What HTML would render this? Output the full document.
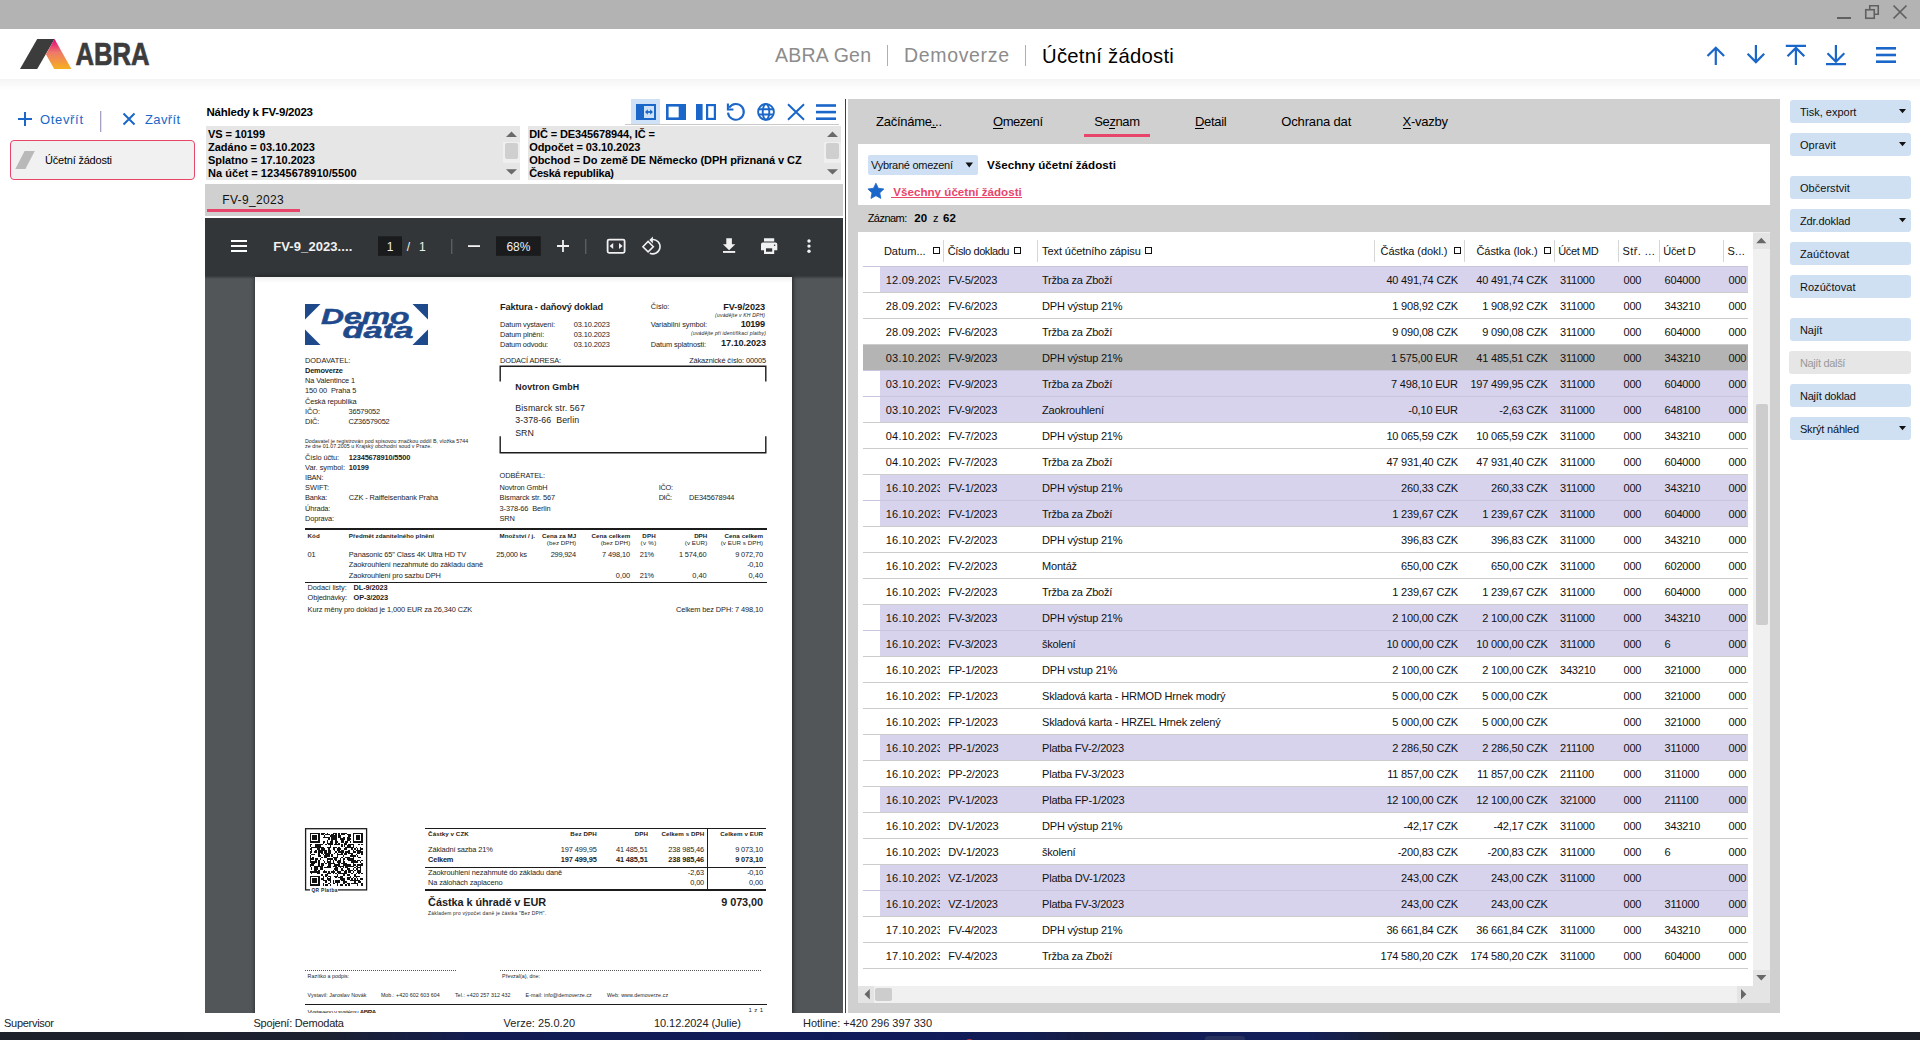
<!DOCTYPE html>
<html><head><meta charset="utf-8"><title>ABRA Gen - Účetní žádosti</title>
<style>
html,body{margin:0;padding:0;}
body{width:1920px;height:1040px;overflow:hidden;position:relative;background:#fff;font-family:"Liberation Sans", sans-serif;color:#000;}
.t{position:absolute;white-space:nowrap;}
svg{overflow:visible;}
</style></head><body>
<div style="position:absolute;left:0px;top:0px;width:1920px;height:29px;background:#b3b3b3;"></div>
<svg style="position:absolute;left:1830px;top:0px;" width="90" height="29" viewBox="1830 0 90 29"><rect x="1837" y="17" width="14" height="2" fill="#606060"/><rect x="1865.75" y="9.75" width="8.5" height="8.5" fill="none" stroke="#606060" stroke-width="1.6"/><path d="M1869.75 9.2V5.75H1878.25V14.25H1874.8" fill="none" stroke="#606060" stroke-width="1.6"/><path d="M1893.5 5.5L1906.5 18.5M1906.5 5.5L1893.5 18.5" stroke="#606060" stroke-width="1.7"/></svg>
<div style="position:absolute;left:0;top:79px;width:1920px;height:10px;background:linear-gradient(#f4f4f4,#f7f7f7 30%,#fdfdfd 90%,#fefefe)"></div>
<svg style="position:absolute;left:15px;top:35px;" width="140" height="40" viewBox="15 35 140 40"><defs><linearGradient id="lg" x1="0" y1="0" x2="0" y2="1"><stop offset="0" stop-color="#e4007c"/><stop offset="0.45" stop-color="#ee7a6a"/><stop offset="1" stop-color="#f6b01e"/></linearGradient></defs><polygon points="20,69 37.2,69 54.6,39 37.2,39" fill="#3c3c3c"/><polygon points="54.6,39 71.4,69 54.2,69 45.9,54.2" fill="url(#lg)"/><text x="75.4" y="64.6" font-family="Liberation Sans" font-weight="bold" font-size="31" fill="#3c3c3c" stroke="#3c3c3c" stroke-width="0.7" textLength="74.2" lengthAdjust="spacingAndGlyphs">ABRA</text></svg>
<div class="t" style="left:775px;top:46.49px;font-size:19.5px;line-height:19.5px;color:#8c8c8c;letter-spacing:0.242px;">ABRA Gen</div>
<div style="position:absolute;left:887px;top:45px;width:1px;height:21px;background:#aeaacb;"></div>
<div class="t" style="left:904px;top:46.49px;font-size:19.5px;line-height:19.5px;color:#8c8c8c;letter-spacing:0.662px;">Demoverze</div>
<div style="position:absolute;left:1025px;top:45px;width:1px;height:21px;background:#aeaacb;"></div>
<div class="t" style="left:1042px;top:45.82px;font-size:20.3px;line-height:20.3px;letter-spacing:0.259px;">Účetní žádosti</div>
<svg style="position:absolute;left:1700px;top:40px;" width="210" height="30" viewBox="1700 40 210 30"><g stroke="#1a67c9" stroke-width="2.2" fill="none"><path d="M1715.8 47.5V65M1707.5 56L1715.8 47.7L1724.1 56"/><path d="M1755.9 45V62.5M1747.6 53.8L1755.9 62.1L1764.2 53.8"/><path d="M1785.8 45.8H1806M1795.9 47.8V65M1787.5 56.3L1795.9 47.9L1804.3 56.3"/><path d="M1835.9 45V62.5M1827.5 53.3L1835.9 61.7L1844.3 53.3M1826 64.2H1846"/></g><g fill="#1a67c9"><rect x="1876" y="47" width="20" height="2.6"/><rect x="1876" y="53.7" width="20" height="2.6"/><rect x="1876" y="60.4" width="20" height="2.6"/></g></svg>
<svg style="position:absolute;left:10px;top:105px;" width="180" height="30" viewBox="10 105 180 30"><g stroke="#1a67c9" stroke-width="2" fill="none"><path d="M25 112V126M18 119H32"/><path d="M123.5 113.5L134.5 124.5M134.5 113.5L123.5 124.5"/></g><rect x="100" y="111" width="1.3" height="21" fill="#a5a2c3"/></svg>
<div class="t" style="left:40px;top:113.0px;font-size:13px;line-height:13px;color:#1a67c9;letter-spacing:0.666px;">Otevřít</div>
<div class="t" style="left:145px;top:113.0px;font-size:13px;line-height:13px;color:#1a67c9;letter-spacing:0.355px;">Zavřít</div>
<div style="position:absolute;left:10px;top:140px;width:185px;height:40px;background:#f1f1f1;border:1.3px solid #e8456b;border-radius:4px;box-sizing:border-box;"></div>
<svg style="position:absolute;left:14px;top:150px;" width="24" height="20" viewBox="14 150 24 20"><polygon points="15.3,169 25.4,169 34.8,151 24.6,151" fill="#b9b9b9"/></svg>
<div class="t" style="left:45px;top:154.69px;font-size:11px;line-height:11px;letter-spacing:-0.208px;">Účetní žádosti</div>
<div class="t" style="left:206.5px;top:107.27px;font-size:11.5px;line-height:11.5px;font-weight:bold;letter-spacing:-0.227px;">Náhledy k FV-9/2023</div>
<div style="position:absolute;left:631px;top:99px;width:29px;height:25px;background:#cfe1f6;"></div>
<svg style="position:absolute;left:630px;top:98px;" width="212" height="28" viewBox="630 98 212 28"><rect x="636" y="104" width="20" height="16" fill="#1a67c9"/><rect x="644" y="106" width="10" height="12" fill="#cfe1f6"/><path d="M646.3 112H651.7" stroke="#1a67c9" stroke-width="1.8"/><path d="M645 112L647.8 109.2V114.8Z M653 112L650.2 109.2V114.8Z" fill="#1a67c9"/><rect x="667.3" y="105.3" width="17.4" height="13.4" fill="none" stroke="#1a67c9" stroke-width="2.6"/><rect x="678.7" y="104" width="7.3" height="16" fill="#1a67c9"/><rect x="696" y="104" width="6.6" height="16" fill="#1a67c9"/><rect x="707.1" y="105.1" width="7.8" height="13.8" fill="none" stroke="#1a67c9" stroke-width="2.2"/><path d="M728 112.6A7.9 7.9 0 1 0 729.2 107.6" fill="none" stroke="#1a67c9" stroke-width="2.1"/><path d="M727.9 103.6V109.5H733.4" fill="none" stroke="#1a67c9" stroke-width="2.1"/><g fill="none" stroke="#1a67c9" stroke-width="1.9"><circle cx="766" cy="111.9" r="7.9"/><ellipse cx="766" cy="111.9" rx="3.3" ry="7.9"/><path d="M758.3 109.3H773.7M758.3 114.5H773.7"/></g><path d="M788 104.2L804 119.8M804 104.2L788 119.8" stroke="#1a67c9" stroke-width="2"/><g fill="#1a67c9"><rect x="816" y="104.2" width="20" height="2.6"/><rect x="816" y="110.8" width="20" height="2.6"/><rect x="816" y="117.4" width="20" height="2.6"/></g></svg>
<div style="position:absolute;left:625px;top:124px;width:214px;height:1px;background:#c9c9c9;"></div>
<div style="position:absolute;left:845px;top:99px;width:1.2px;height:914px;background:#3d3d3d;"></div>
<div style="position:absolute;left:206px;top:126px;width:314px;height:54px;background:#e6e6e6;"></div>
<div style="position:absolute;left:503px;top:126px;width:17px;height:54px;background:#e6e6e6;"></div>
<div style="position:absolute;left:503px;top:142px;width:17px;height:21px;background:#efefef;"></div>
<div style="position:absolute;left:505px;top:143px;width:13px;height:16px;background:#cfcfcf;border-radius:2px;"></div>
<svg style="position:absolute;left:503px;top:126px;" width="17" height="54" viewBox="503 126 17 54"><path d="M506 137L511.5 131.6L517 137Z M506 169.2L511.5 174.6L517 169.2Z" fill="#6a6a6a"/></svg>
<div class="t" style="left:208px;top:129.19px;font-size:11px;line-height:11px;font-weight:bold;letter-spacing:-0.089px;">VS = 10199</div>
<div class="t" style="left:208px;top:142.19px;font-size:11px;line-height:11px;font-weight:bold;letter-spacing:0.016px;">Zadáno = 03.10.2023</div>
<div class="t" style="left:208px;top:155.19px;font-size:11px;line-height:11px;font-weight:bold;letter-spacing:-0.049px;">Splatno = 17.10.2023</div>
<div class="t" style="left:208px;top:168.19px;font-size:11px;line-height:11px;font-weight:bold;letter-spacing:0.056px;">Na účet = 12345678910/5500</div>
<div style="position:absolute;left:527.5px;top:126px;width:313.5px;height:54px;background:#e6e6e6;"></div>
<div style="position:absolute;left:824px;top:126px;width:17px;height:54px;background:#e6e6e6;"></div>
<div style="position:absolute;left:824px;top:142px;width:17px;height:21px;background:#efefef;"></div>
<div style="position:absolute;left:826px;top:143px;width:13px;height:16px;background:#cfcfcf;border-radius:2px;"></div>
<svg style="position:absolute;left:824px;top:126px;" width="17" height="54" viewBox="824 126 17 54"><path d="M827 137L832.5 131.6L838 137Z M827 169.2L832.5 174.6L838 169.2Z" fill="#6a6a6a"/></svg>
<div class="t" style="left:529.2px;top:129.19px;font-size:11px;line-height:11px;font-weight:bold;letter-spacing:-0.119px;">DIČ = DE345678944, IČ =</div>
<div class="t" style="left:529.2px;top:142.19px;font-size:11px;line-height:11px;font-weight:bold;letter-spacing:-0.053px;">Odpočet = 03.10.2023</div>
<div class="t" style="left:529.2px;top:155.19px;font-size:11px;line-height:11px;font-weight:bold;letter-spacing:-0.05px;">Obchod = Do země DE Německo (DPH přiznaná v CZ</div>
<div class="t" style="left:529.2px;top:168.19px;font-size:11px;line-height:11px;font-weight:bold;letter-spacing:-0.216px;">Česká republika)</div>
<div style="position:absolute;left:205px;top:184px;width:638px;height:32px;background:#d0d0d0;"></div>
<div class="t" style="left:222.3px;top:194.44px;font-size:12px;line-height:12px;color:#111;letter-spacing:0.323px;">FV-9_2023</div>
<div style="position:absolute;left:207px;top:209px;width:93px;height:3px;background:#e8456b;"></div>
<div style="position:absolute;left:205px;top:218px;width:638px;height:58px;background:#323639;"></div>
<div style="position:absolute;left:205px;top:276px;width:638px;height:737px;background:#525659;"></div>
<div style="position:absolute;left:205px;top:276px;width:638px;height:3px;background:linear-gradient(rgba(0,0,0,0.35),rgba(0,0,0,0))"></div>
<svg style="position:absolute;left:205px;top:218px;" width="638" height="58" viewBox="205 218 638 58"><g fill="#fff"><rect x="231" y="240" width="16" height="2"/><rect x="231" y="245" width="16" height="2"/><rect x="231" y="250" width="16" height="2"/></g><rect x="378" y="236.3" width="24" height="19.5" fill="#191b1c"/><rect x="451.3" y="239" width="1" height="15" fill="#6c6f72"/><rect x="468" y="245.2" width="12" height="1.8" fill="#f1f1f1"/><rect x="496" y="236.3" width="44.8" height="19.5" fill="#191b1c"/><path d="M563 240V252M557 246H569" stroke="#f1f1f1" stroke-width="1.8"/><rect x="585.3" y="239" width="1" height="15" fill="#6c6f72"/><rect x="607.6" y="239.6" width="17" height="13.2" rx="1.5" fill="none" stroke="#f1f1f1" stroke-width="1.8"/><path d="M609.6 246L613.2 242.9V249.1Z M622.6 246L619 242.9V249.1Z" fill="#f1f1f1"/><path d="M642.9 246.7L648.1 241.5L653.3 246.7L648.1 251.9Z" fill="none" stroke="#f1f1f1" stroke-width="1.6"/><path d="M652.2 239.5A7.2 7.2 0 1 1 649.8 253.2" fill="none" stroke="#f1f1f1" stroke-width="1.6"/><path d="M649.3 240.1L652.9 236.5V243.6Z" fill="#f1f1f1"/><path d="M726.3 238.3H731.9V244.2H735.3L729.1 250.2L722.9 244.2H726.3Z" fill="#f1f1f1"/><rect x="723" y="251" width="12.2" height="1.9" fill="#f1f1f1"/><path d="M764 238.3H774.2V241.6H764Z M762.8 242.6H775.5Q777.3 242.6 777.3 244.4V250.2H774.2V253.9H764V250.2H761V244.4Q761 242.6 762.8 242.6Z" fill="#f1f1f1"/><rect x="766" y="248.3" width="6.2" height="3.4" fill="#323639"/><circle cx="774.6" cy="245.2" r="0.8" fill="#323639"/><g fill="#f1f1f1"><circle cx="809" cy="241" r="1.7"/><circle cx="809" cy="246.1" r="1.7"/><circle cx="809" cy="251.2" r="1.7"/></g></svg>
<div class="t" style="left:273.3px;top:240.0px;font-size:13px;line-height:13px;font-weight:bold;color:#f1f1f1;letter-spacing:0.079px;">FV-9_2023....</div>
<div class="t" style="left:-110px;width:1000px;text-align:center;top:240.84px;font-size:12px;line-height:12px;color:#f1f1f1;">1</div>
<div class="t" style="left:-91.69999999999999px;width:1000px;text-align:center;top:240.84px;font-size:12px;line-height:12px;color:#f1f1f1;">/</div>
<div class="t" style="left:-77.69999999999999px;width:1000px;text-align:center;top:240.84px;font-size:12px;line-height:12px;color:#f1f1f1;">1</div>
<div class="t" style="left:18.399999999999977px;width:1000px;text-align:center;top:240.84px;font-size:12px;line-height:12px;color:#f1f1f1;">68%</div>
<div style="position:absolute;left:0;top:0;width:1920px;height:1013px;overflow:hidden">
<div style="position:absolute;left:255px;top:277px;width:537px;height:760px;background:#fff;box-shadow:0 0 4px 0.5px rgba(0,0,0,0.6);"></div>
<div style="position:absolute;left:255px;top:277px;width:537px;height:6px;background:linear-gradient(rgba(0,0,0,0.06),rgba(0,0,0,0))"></div>
<svg style="position:absolute;left:300px;top:300px;" width="135" height="50" viewBox="300 300 135 50"><g fill="#1e4a8c"><polygon points="305,304 320.5,304 305,319.5"/><polygon points="412.5,304 428,304 428,319.5"/><polygon points="305,329.5 305,345 320.5,345"/><polygon points="428,329.5 428,345 412.5,345"/></g><text x="321" y="324.3" font-family="Liberation Sans" font-weight="bold" font-style="italic" font-size="22.3" fill="#1e4a8c" stroke="#1e4a8c" stroke-width="0.5" textLength="88.5" lengthAdjust="spacingAndGlyphs">Demo</text><text x="342.5" y="338.4" font-family="Liberation Sans" font-weight="bold" font-style="italic" font-size="22.3" fill="#1e4a8c" stroke="#1e4a8c" stroke-width="0.5" textLength="71" lengthAdjust="spacingAndGlyphs">data</text></svg>
<div class="t" style="left:500.1px;top:303.21px;font-size:9.2px;line-height:9.2px;font-weight:bold;color:#1c1c1c;letter-spacing:-0.124px;">Faktura - daňový doklad</div>
<div class="t" style="left:650.8px;top:302.94px;font-size:7.4px;line-height:7.4px;color:#1c1c1c;letter-spacing:-0.083px;">Číslo:</div>
<div class="t" style="left:-234.969px;width:1000px;text-align:right;top:303.21px;font-size:9.2px;line-height:9.2px;font-weight:bold;color:#1c1c1c;letter-spacing:-0.069px;">FV-9/2023</div>
<div class="t" style="left:-234.806px;width:1000px;text-align:right;top:312.97px;font-size:5px;line-height:5px;color:#1c1c1c;font-style:italic;letter-spacing:0.194px;">(uvádějte v KH DPH)</div>
<div class="t" style="left:500.1px;top:320.74px;font-size:7.4px;line-height:7.4px;color:#1c1c1c;letter-spacing:-0.138px;">Datum vystavení:</div>
<div class="t" style="left:573.8px;top:320.74px;font-size:7.4px;line-height:7.4px;color:#1c1c1c;letter-spacing:-0.115px;">03.10.2023</div>
<div class="t" style="left:500.1px;top:330.84px;font-size:7.4px;line-height:7.4px;color:#1c1c1c;letter-spacing:-0.156px;">Datum plnění:</div>
<div class="t" style="left:573.8px;top:330.84px;font-size:7.4px;line-height:7.4px;color:#1c1c1c;letter-spacing:-0.115px;">03.10.2023</div>
<div class="t" style="left:500.1px;top:340.74px;font-size:7.4px;line-height:7.4px;color:#1c1c1c;letter-spacing:-0.174px;">Datum odvodu:</div>
<div class="t" style="left:573.8px;top:340.74px;font-size:7.4px;line-height:7.4px;color:#1c1c1c;letter-spacing:-0.115px;">03.10.2023</div>
<div class="t" style="left:650.8px;top:320.74px;font-size:7.4px;line-height:7.4px;color:#1c1c1c;letter-spacing:-0.086px;">Variabilní symbol:</div>
<div class="t" style="left:-235.296px;width:1000px;text-align:right;top:320.21px;font-size:9.2px;line-height:9.2px;font-weight:bold;color:#1c1c1c;letter-spacing:-0.296px;">10199</div>
<div class="t" style="left:-234.017px;width:1000px;text-align:right;top:331.07px;font-size:5px;line-height:5px;color:#1c1c1c;font-style:italic;letter-spacing:0.183px;">(uvádějte při identifikaci platby)</div>
<div class="t" style="left:650.8px;top:340.74px;font-size:7.4px;line-height:7.4px;color:#1c1c1c;letter-spacing:-0.111px;">Datum splatnosti:</div>
<div class="t" style="left:-234.116px;width:1000px;text-align:right;top:338.91px;font-size:9.2px;line-height:9.2px;font-weight:bold;color:#1c1c1c;letter-spacing:-0.116px;">17.10.2023</div>
<div class="t" style="left:500.1px;top:356.74px;font-size:7.4px;line-height:7.4px;color:#1c1c1c;letter-spacing:-0.147px;">DODACÍ ADRESA:</div>
<div class="t" style="left:-234.109px;width:1000px;text-align:right;top:356.74px;font-size:7.4px;line-height:7.4px;color:#1c1c1c;letter-spacing:-0.109px;">Zákaznické číslo: 00005</div>
<svg style="position:absolute;left:495px;top:362px;" width="275" height="95" viewBox="495 362 275 95"><g fill="none" stroke="#1c1c1c" stroke-width="1.4"><path d="M500.2 381.5V366.3H765.8V381.5"/><path d="M500.2 436.3V452.8H765.8V436.3"/></g></svg>
<div class="t" style="left:515.3px;top:383.25px;font-size:8.8px;line-height:8.8px;font-weight:bold;color:#1c1c1c;letter-spacing:0.111px;">Novtron GmbH</div>
<div class="t" style="left:515.3px;top:403.75px;font-size:8.8px;line-height:8.8px;color:#1c1c1c;letter-spacing:0.126px;">Bismarck str. 567</div>
<div class="t" style="left:515.3px;top:416.25px;font-size:8.8px;line-height:8.8px;color:#1c1c1c;letter-spacing:0.079px;">3-378-66&nbsp; Berlin</div>
<div class="t" style="left:515.3px;top:429.35px;font-size:8.8px;line-height:8.8px;color:#1c1c1c;letter-spacing:-0.04px;">SRN</div>
<div class="t" style="left:305px;top:356.94px;font-size:7.4px;line-height:7.4px;color:#1c1c1c;letter-spacing:0.019px;">DODAVATEL:</div>
<div class="t" style="left:305px;top:367.04px;font-size:7.4px;line-height:7.4px;font-weight:bold;color:#1c1c1c;letter-spacing:-0.186px;">Demoverze</div>
<div class="t" style="left:305px;top:377.04px;font-size:7.4px;line-height:7.4px;color:#1c1c1c;letter-spacing:-0.107px;">Na Valentince 1</div>
<div class="t" style="left:305px;top:387.14px;font-size:7.4px;line-height:7.4px;color:#1c1c1c;letter-spacing:-0.09px;">150 00&nbsp; Praha 5</div>
<div class="t" style="left:305px;top:397.94px;font-size:7.4px;line-height:7.4px;color:#1c1c1c;letter-spacing:-0.097px;">Česká republika</div>
<div class="t" style="left:305px;top:408.04px;font-size:7.4px;line-height:7.4px;color:#1c1c1c;letter-spacing:-0.071px;">IČO:</div>
<div class="t" style="left:348.6px;top:408.04px;font-size:7.4px;line-height:7.4px;color:#1c1c1c;letter-spacing:-0.204px;">36579052</div>
<div class="t" style="left:305px;top:418.04px;font-size:7.4px;line-height:7.4px;color:#1c1c1c;letter-spacing:-0.2px;">DIČ:</div>
<div class="t" style="left:348.6px;top:418.04px;font-size:7.4px;line-height:7.4px;color:#1c1c1c;letter-spacing:-0.177px;">CZ36579052</div>
<div class="t" style="left:305px;top:438.71px;font-size:5.3px;line-height:5.3px;color:#1c1c1c;letter-spacing:0.048px;">Dodavatel je registrován pod spisovou značkou oddíl B, vložka 5744</div>
<div class="t" style="left:305px;top:444.41px;font-size:5.3px;line-height:5.3px;color:#1c1c1c;letter-spacing:0.048px;">ze dne 01.07.2005 u Krajský obchodní soud v Praze.</div>
<div class="t" style="left:305.1px;top:453.54px;font-size:7.4px;line-height:7.4px;color:#1c1c1c;letter-spacing:-0.096px;">Číslo účtu:</div>
<div class="t" style="left:348.8px;top:453.54px;font-size:7.4px;line-height:7.4px;font-weight:bold;color:#1c1c1c;letter-spacing:-0.146px;">12345678910/5500</div>
<div class="t" style="left:305.1px;top:463.64px;font-size:7.4px;line-height:7.4px;color:#1c1c1c;letter-spacing:-0.015px;">Var. symbol:</div>
<div class="t" style="left:348.8px;top:463.64px;font-size:7.4px;line-height:7.4px;font-weight:bold;color:#1c1c1c;letter-spacing:-0.145px;">10199</div>
<div class="t" style="left:305.1px;top:474.24px;font-size:7.4px;line-height:7.4px;color:#1c1c1c;letter-spacing:-0.232px;">IBAN:</div>
<div class="t" style="left:305.1px;top:484.34px;font-size:7.4px;line-height:7.4px;color:#1c1c1c;letter-spacing:-0.05px;">SWIFT:</div>
<div class="t" style="left:305.1px;top:494.44px;font-size:7.4px;line-height:7.4px;color:#1c1c1c;letter-spacing:-0.168px;">Banka:</div>
<div class="t" style="left:348.8px;top:494.44px;font-size:7.4px;line-height:7.4px;color:#1c1c1c;letter-spacing:-0.104px;">CZK - Raiffeisenbank Praha</div>
<div class="t" style="left:305.1px;top:504.54px;font-size:7.4px;line-height:7.4px;color:#1c1c1c;letter-spacing:-0.171px;">Úhrada:</div>
<div class="t" style="left:305.1px;top:514.64px;font-size:7.4px;line-height:7.4px;color:#1c1c1c;letter-spacing:-0.147px;">Doprava:</div>
<div class="t" style="left:499.6px;top:471.74px;font-size:7.4px;line-height:7.4px;color:#1c1c1c;letter-spacing:-0.092px;">ODBĚRATEL:</div>
<div class="t" style="left:499.6px;top:484.34px;font-size:7.4px;line-height:7.4px;color:#1c1c1c;letter-spacing:-0.123px;">Novtron GmbH</div>
<div class="t" style="left:499.6px;top:494.44px;font-size:7.4px;line-height:7.4px;color:#1c1c1c;letter-spacing:-0.072px;">Bismarck str. 567</div>
<div class="t" style="left:499.6px;top:504.54px;font-size:7.4px;line-height:7.4px;color:#1c1c1c;letter-spacing:-0.11px;">3-378-66&nbsp; Berlin</div>
<div class="t" style="left:499.6px;top:514.64px;font-size:7.4px;line-height:7.4px;color:#1c1c1c;letter-spacing:-0.212px;">SRN</div>
<div class="t" style="left:658.7px;top:484.34px;font-size:7.4px;line-height:7.4px;color:#1c1c1c;letter-spacing:-0.271px;">IČO:</div>
<div class="t" style="left:658.7px;top:494.44px;font-size:7.4px;line-height:7.4px;color:#1c1c1c;letter-spacing:-0.467px;">DIČ:</div>
<div class="t" style="left:689px;top:494.44px;font-size:7.4px;line-height:7.4px;color:#1c1c1c;letter-spacing:-0.182px;">DE345678944</div>
<div style="position:absolute;left:305px;top:528px;width:461.8px;height:2.2px;background:#1c1c1c;"></div>
<div class="t" style="left:307.6px;top:532.85px;font-size:6.2px;line-height:6.2px;font-weight:bold;color:#1c1c1c;letter-spacing:0.024px;">Kód</div>
<div class="t" style="left:348.8px;top:532.85px;font-size:6.2px;line-height:6.2px;font-weight:bold;color:#1c1c1c;letter-spacing:0.038px;">Předmět zdanitelného plnění</div>
<div class="t" style="left:499.6px;top:532.85px;font-size:6.2px;line-height:6.2px;font-weight:bold;color:#1c1c1c;letter-spacing:0.022px;">Množství / j.</div>
<div class="t" style="left:-423.863px;width:1000px;text-align:right;top:532.85px;font-size:6.2px;line-height:6.2px;font-weight:bold;color:#1c1c1c;letter-spacing:0.037px;">Cena za MJ</div>
<div class="t" style="left:-423.855px;width:1000px;text-align:right;top:539.65px;font-size:6.2px;line-height:6.2px;color:#1c1c1c;letter-spacing:0.045px;">(bez DPH)</div>
<div class="t" style="left:-369.701px;width:1000px;text-align:right;top:532.85px;font-size:6.2px;line-height:6.2px;font-weight:bold;color:#1c1c1c;letter-spacing:0.099px;">Cena celkem</div>
<div class="t" style="left:-369.717px;width:1000px;text-align:right;top:539.65px;font-size:6.2px;line-height:6.2px;color:#1c1c1c;letter-spacing:0.083px;">(bez DPH)</div>
<div class="t" style="left:-344.145px;width:1000px;text-align:right;top:532.85px;font-size:6.2px;line-height:6.2px;font-weight:bold;color:#1c1c1c;letter-spacing:0.155px;">DPH</div>
<div class="t" style="left:-343.491px;width:1000px;text-align:right;top:539.65px;font-size:6.2px;line-height:6.2px;color:#1c1c1c;letter-spacing:0.309px;">(v %)</div>
<div class="t" style="left:-292.795px;width:1000px;text-align:right;top:532.85px;font-size:6.2px;line-height:6.2px;font-weight:bold;color:#1c1c1c;letter-spacing:0.005px;">DPH</div>
<div class="t" style="left:-292.724px;width:1000px;text-align:right;top:539.65px;font-size:6.2px;line-height:6.2px;color:#1c1c1c;letter-spacing:0.076px;">(v EUR)</div>
<div class="t" style="left:-236.931px;width:1000px;text-align:right;top:532.85px;font-size:6.2px;line-height:6.2px;font-weight:bold;color:#1c1c1c;letter-spacing:0.069px;">Cena celkem</div>
<div class="t" style="left:-236.94px;width:1000px;text-align:right;top:539.65px;font-size:6.2px;line-height:6.2px;color:#1c1c1c;letter-spacing:0.06px;">(v EUR s DPH)</div>
<div class="t" style="left:307.6px;top:551.24px;font-size:7.4px;line-height:7.4px;color:#1c1c1c;letter-spacing:-0.131px;">01</div>
<div class="t" style="left:348.8px;top:551.24px;font-size:7.4px;line-height:7.4px;color:#1c1c1c;letter-spacing:-0.104px;">Panasonic 65" Class 4K Ultra HD TV</div>
<div class="t" style="left:496.3px;top:551.24px;font-size:7.4px;line-height:7.4px;color:#1c1c1c;letter-spacing:-0.186px;">25,000 ks</div>
<div class="t" style="left:-424.108px;width:1000px;text-align:right;top:551.24px;font-size:7.4px;line-height:7.4px;color:#1c1c1c;letter-spacing:-0.208px;">299,924</div>
<div class="t" style="left:-369.872px;width:1000px;text-align:right;top:551.24px;font-size:7.4px;line-height:7.4px;color:#1c1c1c;letter-spacing:-0.072px;">7 498,10</div>
<div class="t" style="left:639.8px;top:551.24px;font-size:7.4px;line-height:7.4px;color:#1c1c1c;letter-spacing:-0.205px;">21%</div>
<div class="t" style="left:-293.444px;width:1000px;text-align:right;top:551.24px;font-size:7.4px;line-height:7.4px;color:#1c1c1c;letter-spacing:-0.144px;">1 574,60</div>
<div class="t" style="left:-237.144px;width:1000px;text-align:right;top:551.24px;font-size:7.4px;line-height:7.4px;color:#1c1c1c;letter-spacing:-0.144px;">9 072,70</div>
<div class="t" style="left:348.8px;top:561.44px;font-size:7.4px;line-height:7.4px;color:#1c1c1c;letter-spacing:-0.104px;">Zaokrouhlení nezahmuté do základu daně</div>
<div class="t" style="left:-237.242px;width:1000px;text-align:right;top:561.44px;font-size:7.4px;line-height:7.4px;color:#1c1c1c;letter-spacing:-0.242px;">-0,10</div>
<div class="t" style="left:348.8px;top:571.94px;font-size:7.4px;line-height:7.4px;color:#1c1c1c;letter-spacing:-0.129px;">Zaokrouhlení pro sazbu DPH</div>
<div class="t" style="left:-369.801px;width:1000px;text-align:right;top:571.94px;font-size:7.4px;line-height:7.4px;color:#1c1c1c;letter-spacing:-0.001px;">0,00</div>
<div class="t" style="left:639.8px;top:571.94px;font-size:7.4px;line-height:7.4px;color:#1c1c1c;letter-spacing:-0.205px;">21%</div>
<div class="t" style="left:-293.301px;width:1000px;text-align:right;top:571.94px;font-size:7.4px;line-height:7.4px;color:#1c1c1c;letter-spacing:-0.001px;">0,40</div>
<div class="t" style="left:-236.934px;width:1000px;text-align:right;top:571.94px;font-size:7.4px;line-height:7.4px;color:#1c1c1c;letter-spacing:0.066px;">0,40</div>
<div style="position:absolute;left:305px;top:581.6px;width:461.8px;height:1.1px;background:#1c1c1c;"></div>
<div class="t" style="left:307.6px;top:584.14px;font-size:7.4px;line-height:7.4px;color:#1c1c1c;letter-spacing:-0.092px;">Dodací listy:</div>
<div class="t" style="left:353.6px;top:584.14px;font-size:7.4px;line-height:7.4px;font-weight:bold;color:#1c1c1c;letter-spacing:-0.108px;">DL-9/2023</div>
<div class="t" style="left:307.6px;top:594.24px;font-size:7.4px;line-height:7.4px;color:#1c1c1c;letter-spacing:-0.153px;">Objednávky:</div>
<div class="t" style="left:353.6px;top:594.24px;font-size:7.4px;line-height:7.4px;font-weight:bold;color:#1c1c1c;letter-spacing:-0.149px;">OP-3/2023</div>
<div class="t" style="left:307.6px;top:605.64px;font-size:7.4px;line-height:7.4px;color:#1c1c1c;letter-spacing:-0.099px;">Kurz měny pro doklad je 1,000 EUR za 26,340 CZK</div>
<div class="t" style="left:-237.112px;width:1000px;text-align:right;top:605.64px;font-size:7.4px;line-height:7.4px;color:#1c1c1c;letter-spacing:-0.112px;">Celkem bez DPH: 7 498,10</div>
<svg style="position:absolute;left:300px;top:820px;" width="75" height="80" viewBox="300 820 75 80"><rect x="305.6" y="828.7" width="61" height="61.2" fill="none" stroke="#1c1c1c" stroke-width="1.3"/><rect x="310" y="887" width="28" height="5" fill="#fff"/><path d="M309.60 832.50h1.44v1.44h-1.44zM309.60 833.94h1.44v1.44h-1.44zM309.60 835.37h1.44v1.44h-1.44zM309.60 836.81h1.44v1.44h-1.44zM309.60 838.24h1.44v1.44h-1.44zM309.60 839.68h1.44v1.44h-1.44zM309.60 841.11h1.44v1.44h-1.44zM309.60 843.98h1.44v1.44h-1.44zM309.60 845.42h1.44v1.44h-1.44zM309.60 848.29h1.44v1.44h-1.44zM309.60 851.16h1.44v1.44h-1.44zM309.60 852.59h1.44v1.44h-1.44zM309.60 855.46h1.44v1.44h-1.44zM309.60 856.90h1.44v1.44h-1.44zM309.60 858.33h1.44v1.44h-1.44zM309.60 859.77h1.44v1.44h-1.44zM309.60 861.20h1.44v1.44h-1.44zM309.60 864.07h1.44v1.44h-1.44zM309.60 865.51h1.44v1.44h-1.44zM309.60 871.25h1.44v1.44h-1.44zM309.60 875.55h1.44v1.44h-1.44zM309.60 876.99h1.44v1.44h-1.44zM309.60 878.42h1.44v1.44h-1.44zM309.60 879.86h1.44v1.44h-1.44zM309.60 881.29h1.44v1.44h-1.44zM309.60 882.73h1.44v1.44h-1.44zM309.60 884.16h1.44v1.44h-1.44zM311.04 832.50h1.44v1.44h-1.44zM311.04 841.11h1.44v1.44h-1.44zM311.04 843.98h1.44v1.44h-1.44zM311.04 846.85h1.44v1.44h-1.44zM311.04 848.29h1.44v1.44h-1.44zM311.04 849.72h1.44v1.44h-1.44zM311.04 851.16h1.44v1.44h-1.44zM311.04 854.03h1.44v1.44h-1.44zM311.04 858.33h1.44v1.44h-1.44zM311.04 861.20h1.44v1.44h-1.44zM311.04 862.64h1.44v1.44h-1.44zM311.04 864.07h1.44v1.44h-1.44zM311.04 866.94h1.44v1.44h-1.44zM311.04 868.38h1.44v1.44h-1.44zM311.04 871.25h1.44v1.44h-1.44zM311.04 872.68h1.44v1.44h-1.44zM311.04 875.55h1.44v1.44h-1.44zM311.04 884.16h1.44v1.44h-1.44zM312.47 832.50h1.44v1.44h-1.44zM312.47 835.37h1.44v1.44h-1.44zM312.47 836.81h1.44v1.44h-1.44zM312.47 838.24h1.44v1.44h-1.44zM312.47 841.11h1.44v1.44h-1.44zM312.47 846.85h1.44v1.44h-1.44zM312.47 854.03h1.44v1.44h-1.44zM312.47 856.90h1.44v1.44h-1.44zM312.47 858.33h1.44v1.44h-1.44zM312.47 861.20h1.44v1.44h-1.44zM312.47 862.64h1.44v1.44h-1.44zM312.47 864.07h1.44v1.44h-1.44zM312.47 871.25h1.44v1.44h-1.44zM312.47 875.55h1.44v1.44h-1.44zM312.47 878.42h1.44v1.44h-1.44zM312.47 879.86h1.44v1.44h-1.44zM312.47 881.29h1.44v1.44h-1.44zM312.47 884.16h1.44v1.44h-1.44zM313.91 832.50h1.44v1.44h-1.44zM313.91 835.37h1.44v1.44h-1.44zM313.91 836.81h1.44v1.44h-1.44zM313.91 838.24h1.44v1.44h-1.44zM313.91 841.11h1.44v1.44h-1.44zM313.91 846.85h1.44v1.44h-1.44zM313.91 851.16h1.44v1.44h-1.44zM313.91 854.03h1.44v1.44h-1.44zM313.91 861.20h1.44v1.44h-1.44zM313.91 862.64h1.44v1.44h-1.44zM313.91 865.51h1.44v1.44h-1.44zM313.91 866.94h1.44v1.44h-1.44zM313.91 868.38h1.44v1.44h-1.44zM313.91 869.81h1.44v1.44h-1.44zM313.91 871.25h1.44v1.44h-1.44zM313.91 875.55h1.44v1.44h-1.44zM313.91 878.42h1.44v1.44h-1.44zM313.91 879.86h1.44v1.44h-1.44zM313.91 881.29h1.44v1.44h-1.44zM313.91 884.16h1.44v1.44h-1.44zM315.34 832.50h1.44v1.44h-1.44zM315.34 835.37h1.44v1.44h-1.44zM315.34 836.81h1.44v1.44h-1.44zM315.34 838.24h1.44v1.44h-1.44zM315.34 841.11h1.44v1.44h-1.44zM315.34 843.98h1.44v1.44h-1.44zM315.34 845.42h1.44v1.44h-1.44zM315.34 846.85h1.44v1.44h-1.44zM315.34 849.72h1.44v1.44h-1.44zM315.34 851.16h1.44v1.44h-1.44zM315.34 858.33h1.44v1.44h-1.44zM315.34 859.77h1.44v1.44h-1.44zM315.34 861.20h1.44v1.44h-1.44zM315.34 865.51h1.44v1.44h-1.44zM315.34 866.94h1.44v1.44h-1.44zM315.34 868.38h1.44v1.44h-1.44zM315.34 869.81h1.44v1.44h-1.44zM315.34 871.25h1.44v1.44h-1.44zM315.34 875.55h1.44v1.44h-1.44zM315.34 878.42h1.44v1.44h-1.44zM315.34 879.86h1.44v1.44h-1.44zM315.34 881.29h1.44v1.44h-1.44zM315.34 884.16h1.44v1.44h-1.44zM316.78 832.50h1.44v1.44h-1.44zM316.78 841.11h1.44v1.44h-1.44zM316.78 843.98h1.44v1.44h-1.44zM316.78 845.42h1.44v1.44h-1.44zM316.78 846.85h1.44v1.44h-1.44zM316.78 848.29h1.44v1.44h-1.44zM316.78 858.33h1.44v1.44h-1.44zM316.78 865.51h1.44v1.44h-1.44zM316.78 866.94h1.44v1.44h-1.44zM316.78 868.38h1.44v1.44h-1.44zM316.78 871.25h1.44v1.44h-1.44zM316.78 872.68h1.44v1.44h-1.44zM316.78 875.55h1.44v1.44h-1.44zM316.78 884.16h1.44v1.44h-1.44zM318.21 832.50h1.44v1.44h-1.44zM318.21 833.94h1.44v1.44h-1.44zM318.21 835.37h1.44v1.44h-1.44zM318.21 836.81h1.44v1.44h-1.44zM318.21 838.24h1.44v1.44h-1.44zM318.21 839.68h1.44v1.44h-1.44zM318.21 841.11h1.44v1.44h-1.44zM318.21 843.98h1.44v1.44h-1.44zM318.21 845.42h1.44v1.44h-1.44zM318.21 846.85h1.44v1.44h-1.44zM318.21 848.29h1.44v1.44h-1.44zM318.21 849.72h1.44v1.44h-1.44zM318.21 851.16h1.44v1.44h-1.44zM318.21 852.59h1.44v1.44h-1.44zM318.21 854.03h1.44v1.44h-1.44zM318.21 855.46h1.44v1.44h-1.44zM318.21 859.77h1.44v1.44h-1.44zM318.21 861.20h1.44v1.44h-1.44zM318.21 862.64h1.44v1.44h-1.44zM318.21 864.07h1.44v1.44h-1.44zM318.21 865.51h1.44v1.44h-1.44zM318.21 869.81h1.44v1.44h-1.44zM318.21 871.25h1.44v1.44h-1.44zM318.21 872.68h1.44v1.44h-1.44zM318.21 875.55h1.44v1.44h-1.44zM318.21 876.99h1.44v1.44h-1.44zM318.21 878.42h1.44v1.44h-1.44zM318.21 879.86h1.44v1.44h-1.44zM318.21 881.29h1.44v1.44h-1.44zM318.21 882.73h1.44v1.44h-1.44zM318.21 884.16h1.44v1.44h-1.44zM319.65 843.98h1.44v1.44h-1.44zM319.65 845.42h1.44v1.44h-1.44zM319.65 846.85h1.44v1.44h-1.44zM319.65 849.72h1.44v1.44h-1.44zM319.65 851.16h1.44v1.44h-1.44zM319.65 855.46h1.44v1.44h-1.44zM319.65 858.33h1.44v1.44h-1.44zM319.65 865.51h1.44v1.44h-1.44zM319.65 866.94h1.44v1.44h-1.44zM319.65 868.38h1.44v1.44h-1.44zM321.08 832.50h1.44v1.44h-1.44zM321.08 833.94h1.44v1.44h-1.44zM321.08 843.98h1.44v1.44h-1.44zM321.08 846.85h1.44v1.44h-1.44zM321.08 848.29h1.44v1.44h-1.44zM321.08 849.72h1.44v1.44h-1.44zM321.08 851.16h1.44v1.44h-1.44zM321.08 852.59h1.44v1.44h-1.44zM321.08 856.90h1.44v1.44h-1.44zM321.08 862.64h1.44v1.44h-1.44zM321.08 864.07h1.44v1.44h-1.44zM321.08 865.51h1.44v1.44h-1.44zM321.08 866.94h1.44v1.44h-1.44zM321.08 868.38h1.44v1.44h-1.44zM321.08 874.12h1.44v1.44h-1.44zM321.08 878.42h1.44v1.44h-1.44zM322.52 832.50h1.44v1.44h-1.44zM322.52 833.94h1.44v1.44h-1.44zM322.52 836.81h1.44v1.44h-1.44zM322.52 841.11h1.44v1.44h-1.44zM322.52 842.55h1.44v1.44h-1.44zM322.52 846.85h1.44v1.44h-1.44zM322.52 848.29h1.44v1.44h-1.44zM322.52 849.72h1.44v1.44h-1.44zM322.52 854.03h1.44v1.44h-1.44zM322.52 859.77h1.44v1.44h-1.44zM322.52 862.64h1.44v1.44h-1.44zM322.52 864.07h1.44v1.44h-1.44zM322.52 871.25h1.44v1.44h-1.44zM322.52 875.55h1.44v1.44h-1.44zM322.52 876.99h1.44v1.44h-1.44zM322.52 878.42h1.44v1.44h-1.44zM322.52 879.86h1.44v1.44h-1.44zM322.52 882.73h1.44v1.44h-1.44zM322.52 884.16h1.44v1.44h-1.44zM323.95 832.50h1.44v1.44h-1.44zM323.95 835.37h1.44v1.44h-1.44zM323.95 836.81h1.44v1.44h-1.44zM323.95 841.11h1.44v1.44h-1.44zM323.95 848.29h1.44v1.44h-1.44zM323.95 849.72h1.44v1.44h-1.44zM323.95 851.16h1.44v1.44h-1.44zM323.95 852.59h1.44v1.44h-1.44zM323.95 855.46h1.44v1.44h-1.44zM323.95 856.90h1.44v1.44h-1.44zM323.95 861.20h1.44v1.44h-1.44zM323.95 866.94h1.44v1.44h-1.44zM323.95 869.81h1.44v1.44h-1.44zM323.95 871.25h1.44v1.44h-1.44zM323.95 879.86h1.44v1.44h-1.44zM325.39 833.94h1.44v1.44h-1.44zM325.39 836.81h1.44v1.44h-1.44zM325.39 843.98h1.44v1.44h-1.44zM325.39 849.72h1.44v1.44h-1.44zM325.39 851.16h1.44v1.44h-1.44zM325.39 852.59h1.44v1.44h-1.44zM325.39 854.03h1.44v1.44h-1.44zM325.39 855.46h1.44v1.44h-1.44zM325.39 856.90h1.44v1.44h-1.44zM325.39 862.64h1.44v1.44h-1.44zM325.39 866.94h1.44v1.44h-1.44zM325.39 871.25h1.44v1.44h-1.44zM325.39 874.12h1.44v1.44h-1.44zM325.39 875.55h1.44v1.44h-1.44zM325.39 879.86h1.44v1.44h-1.44zM325.39 881.29h1.44v1.44h-1.44zM325.39 884.16h1.44v1.44h-1.44zM326.82 832.50h1.44v1.44h-1.44zM326.82 833.94h1.44v1.44h-1.44zM326.82 836.81h1.44v1.44h-1.44zM326.82 839.68h1.44v1.44h-1.44zM326.82 841.11h1.44v1.44h-1.44zM326.82 842.55h1.44v1.44h-1.44zM326.82 846.85h1.44v1.44h-1.44zM326.82 852.59h1.44v1.44h-1.44zM326.82 854.03h1.44v1.44h-1.44zM326.82 855.46h1.44v1.44h-1.44zM326.82 858.33h1.44v1.44h-1.44zM326.82 859.77h1.44v1.44h-1.44zM326.82 861.20h1.44v1.44h-1.44zM326.82 865.51h1.44v1.44h-1.44zM326.82 866.94h1.44v1.44h-1.44zM326.82 872.68h1.44v1.44h-1.44zM326.82 874.12h1.44v1.44h-1.44zM326.82 876.99h1.44v1.44h-1.44zM326.82 878.42h1.44v1.44h-1.44zM326.82 884.16h1.44v1.44h-1.44zM328.26 833.94h1.44v1.44h-1.44zM328.26 836.81h1.44v1.44h-1.44zM328.26 838.24h1.44v1.44h-1.44zM328.26 842.55h1.44v1.44h-1.44zM328.26 843.98h1.44v1.44h-1.44zM328.26 846.85h1.44v1.44h-1.44zM328.26 848.29h1.44v1.44h-1.44zM328.26 849.72h1.44v1.44h-1.44zM328.26 851.16h1.44v1.44h-1.44zM328.26 852.59h1.44v1.44h-1.44zM328.26 854.03h1.44v1.44h-1.44zM328.26 855.46h1.44v1.44h-1.44zM328.26 858.33h1.44v1.44h-1.44zM328.26 861.20h1.44v1.44h-1.44zM328.26 862.64h1.44v1.44h-1.44zM328.26 864.07h1.44v1.44h-1.44zM328.26 865.51h1.44v1.44h-1.44zM328.26 866.94h1.44v1.44h-1.44zM328.26 871.25h1.44v1.44h-1.44zM328.26 872.68h1.44v1.44h-1.44zM328.26 875.55h1.44v1.44h-1.44zM328.26 878.42h1.44v1.44h-1.44zM328.26 879.86h1.44v1.44h-1.44zM328.26 882.73h1.44v1.44h-1.44zM329.69 835.37h1.44v1.44h-1.44zM329.69 841.11h1.44v1.44h-1.44zM329.69 842.55h1.44v1.44h-1.44zM329.69 843.98h1.44v1.44h-1.44zM329.69 845.42h1.44v1.44h-1.44zM329.69 846.85h1.44v1.44h-1.44zM329.69 849.72h1.44v1.44h-1.44zM329.69 851.16h1.44v1.44h-1.44zM329.69 852.59h1.44v1.44h-1.44zM329.69 858.33h1.44v1.44h-1.44zM329.69 859.77h1.44v1.44h-1.44zM329.69 861.20h1.44v1.44h-1.44zM329.69 862.64h1.44v1.44h-1.44zM329.69 864.07h1.44v1.44h-1.44zM329.69 865.51h1.44v1.44h-1.44zM329.69 866.94h1.44v1.44h-1.44zM329.69 872.68h1.44v1.44h-1.44zM329.69 875.55h1.44v1.44h-1.44zM329.69 876.99h1.44v1.44h-1.44zM329.69 878.42h1.44v1.44h-1.44zM329.69 879.86h1.44v1.44h-1.44zM329.69 881.29h1.44v1.44h-1.44zM329.69 884.16h1.44v1.44h-1.44zM331.13 833.94h1.44v1.44h-1.44zM331.13 835.37h1.44v1.44h-1.44zM331.13 836.81h1.44v1.44h-1.44zM331.13 838.24h1.44v1.44h-1.44zM331.13 839.68h1.44v1.44h-1.44zM331.13 841.11h1.44v1.44h-1.44zM331.13 842.55h1.44v1.44h-1.44zM331.13 843.98h1.44v1.44h-1.44zM331.13 854.03h1.44v1.44h-1.44zM331.13 855.46h1.44v1.44h-1.44zM331.13 858.33h1.44v1.44h-1.44zM331.13 862.64h1.44v1.44h-1.44zM331.13 871.25h1.44v1.44h-1.44zM332.56 832.50h1.44v1.44h-1.44zM332.56 833.94h1.44v1.44h-1.44zM332.56 835.37h1.44v1.44h-1.44zM332.56 836.81h1.44v1.44h-1.44zM332.56 838.24h1.44v1.44h-1.44zM332.56 846.85h1.44v1.44h-1.44zM332.56 848.29h1.44v1.44h-1.44zM332.56 856.90h1.44v1.44h-1.44zM332.56 859.77h1.44v1.44h-1.44zM332.56 861.20h1.44v1.44h-1.44zM332.56 862.64h1.44v1.44h-1.44zM332.56 865.51h1.44v1.44h-1.44zM332.56 869.81h1.44v1.44h-1.44zM332.56 871.25h1.44v1.44h-1.44zM332.56 872.68h1.44v1.44h-1.44zM332.56 879.86h1.44v1.44h-1.44zM332.56 881.29h1.44v1.44h-1.44zM332.56 882.73h1.44v1.44h-1.44zM334.00 832.50h1.44v1.44h-1.44zM334.00 835.37h1.44v1.44h-1.44zM334.00 836.81h1.44v1.44h-1.44zM334.00 838.24h1.44v1.44h-1.44zM334.00 843.98h1.44v1.44h-1.44zM334.00 846.85h1.44v1.44h-1.44zM334.00 848.29h1.44v1.44h-1.44zM334.00 849.72h1.44v1.44h-1.44zM334.00 852.59h1.44v1.44h-1.44zM334.00 856.90h1.44v1.44h-1.44zM334.00 858.33h1.44v1.44h-1.44zM334.00 862.64h1.44v1.44h-1.44zM334.00 864.07h1.44v1.44h-1.44zM334.00 865.51h1.44v1.44h-1.44zM334.00 868.38h1.44v1.44h-1.44zM334.00 871.25h1.44v1.44h-1.44zM334.00 875.55h1.44v1.44h-1.44zM334.00 882.73h1.44v1.44h-1.44zM335.43 832.50h1.44v1.44h-1.44zM335.43 833.94h1.44v1.44h-1.44zM335.43 835.37h1.44v1.44h-1.44zM335.43 836.81h1.44v1.44h-1.44zM335.43 838.24h1.44v1.44h-1.44zM335.43 839.68h1.44v1.44h-1.44zM335.43 841.11h1.44v1.44h-1.44zM335.43 842.55h1.44v1.44h-1.44zM335.43 843.98h1.44v1.44h-1.44zM335.43 846.85h1.44v1.44h-1.44zM335.43 851.16h1.44v1.44h-1.44zM335.43 856.90h1.44v1.44h-1.44zM335.43 858.33h1.44v1.44h-1.44zM335.43 859.77h1.44v1.44h-1.44zM335.43 864.07h1.44v1.44h-1.44zM335.43 865.51h1.44v1.44h-1.44zM335.43 866.94h1.44v1.44h-1.44zM335.43 868.38h1.44v1.44h-1.44zM335.43 869.81h1.44v1.44h-1.44zM335.43 872.68h1.44v1.44h-1.44zM335.43 875.55h1.44v1.44h-1.44zM335.43 876.99h1.44v1.44h-1.44zM335.43 879.86h1.44v1.44h-1.44zM335.43 881.29h1.44v1.44h-1.44zM336.87 841.11h1.44v1.44h-1.44zM336.87 843.98h1.44v1.44h-1.44zM336.87 848.29h1.44v1.44h-1.44zM336.87 849.72h1.44v1.44h-1.44zM336.87 852.59h1.44v1.44h-1.44zM336.87 854.03h1.44v1.44h-1.44zM336.87 855.46h1.44v1.44h-1.44zM336.87 856.90h1.44v1.44h-1.44zM336.87 861.20h1.44v1.44h-1.44zM336.87 864.07h1.44v1.44h-1.44zM336.87 866.94h1.44v1.44h-1.44zM336.87 868.38h1.44v1.44h-1.44zM336.87 869.81h1.44v1.44h-1.44zM336.87 871.25h1.44v1.44h-1.44zM336.87 874.12h1.44v1.44h-1.44zM336.87 875.55h1.44v1.44h-1.44zM336.87 879.86h1.44v1.44h-1.44zM336.87 881.29h1.44v1.44h-1.44zM336.87 882.73h1.44v1.44h-1.44zM336.87 884.16h1.44v1.44h-1.44zM338.30 832.50h1.44v1.44h-1.44zM338.30 833.94h1.44v1.44h-1.44zM338.30 835.37h1.44v1.44h-1.44zM338.30 836.81h1.44v1.44h-1.44zM338.30 842.55h1.44v1.44h-1.44zM338.30 843.98h1.44v1.44h-1.44zM338.30 846.85h1.44v1.44h-1.44zM338.30 848.29h1.44v1.44h-1.44zM338.30 849.72h1.44v1.44h-1.44zM338.30 851.16h1.44v1.44h-1.44zM338.30 854.03h1.44v1.44h-1.44zM338.30 859.77h1.44v1.44h-1.44zM338.30 861.20h1.44v1.44h-1.44zM338.30 862.64h1.44v1.44h-1.44zM338.30 864.07h1.44v1.44h-1.44zM338.30 865.51h1.44v1.44h-1.44zM338.30 871.25h1.44v1.44h-1.44zM338.30 872.68h1.44v1.44h-1.44zM338.30 876.99h1.44v1.44h-1.44zM338.30 879.86h1.44v1.44h-1.44zM338.30 881.29h1.44v1.44h-1.44zM339.74 835.37h1.44v1.44h-1.44zM339.74 836.81h1.44v1.44h-1.44zM339.74 838.24h1.44v1.44h-1.44zM339.74 848.29h1.44v1.44h-1.44zM339.74 851.16h1.44v1.44h-1.44zM339.74 854.03h1.44v1.44h-1.44zM339.74 858.33h1.44v1.44h-1.44zM339.74 859.77h1.44v1.44h-1.44zM339.74 861.20h1.44v1.44h-1.44zM339.74 865.51h1.44v1.44h-1.44zM339.74 866.94h1.44v1.44h-1.44zM339.74 871.25h1.44v1.44h-1.44zM339.74 872.68h1.44v1.44h-1.44zM339.74 875.55h1.44v1.44h-1.44zM339.74 876.99h1.44v1.44h-1.44zM339.74 878.42h1.44v1.44h-1.44zM339.74 884.16h1.44v1.44h-1.44zM341.17 832.50h1.44v1.44h-1.44zM341.17 833.94h1.44v1.44h-1.44zM341.17 838.24h1.44v1.44h-1.44zM341.17 839.68h1.44v1.44h-1.44zM341.17 841.11h1.44v1.44h-1.44zM341.17 843.98h1.44v1.44h-1.44zM341.17 845.42h1.44v1.44h-1.44zM341.17 849.72h1.44v1.44h-1.44zM341.17 851.16h1.44v1.44h-1.44zM341.17 852.59h1.44v1.44h-1.44zM341.17 854.03h1.44v1.44h-1.44zM341.17 856.90h1.44v1.44h-1.44zM341.17 862.64h1.44v1.44h-1.44zM341.17 865.51h1.44v1.44h-1.44zM341.17 868.38h1.44v1.44h-1.44zM341.17 869.81h1.44v1.44h-1.44zM341.17 872.68h1.44v1.44h-1.44zM341.17 875.55h1.44v1.44h-1.44zM341.17 876.99h1.44v1.44h-1.44zM341.17 878.42h1.44v1.44h-1.44zM341.17 879.86h1.44v1.44h-1.44zM341.17 884.16h1.44v1.44h-1.44zM342.61 832.50h1.44v1.44h-1.44zM342.61 833.94h1.44v1.44h-1.44zM342.61 836.81h1.44v1.44h-1.44zM342.61 838.24h1.44v1.44h-1.44zM342.61 839.68h1.44v1.44h-1.44zM342.61 841.11h1.44v1.44h-1.44zM342.61 849.72h1.44v1.44h-1.44zM342.61 851.16h1.44v1.44h-1.44zM342.61 855.46h1.44v1.44h-1.44zM342.61 858.33h1.44v1.44h-1.44zM342.61 859.77h1.44v1.44h-1.44zM342.61 861.20h1.44v1.44h-1.44zM342.61 862.64h1.44v1.44h-1.44zM342.61 864.07h1.44v1.44h-1.44zM342.61 865.51h1.44v1.44h-1.44zM342.61 866.94h1.44v1.44h-1.44zM342.61 869.81h1.44v1.44h-1.44zM342.61 872.68h1.44v1.44h-1.44zM342.61 874.12h1.44v1.44h-1.44zM342.61 878.42h1.44v1.44h-1.44zM342.61 879.86h1.44v1.44h-1.44zM342.61 881.29h1.44v1.44h-1.44zM342.61 882.73h1.44v1.44h-1.44zM344.04 832.50h1.44v1.44h-1.44zM344.04 833.94h1.44v1.44h-1.44zM344.04 836.81h1.44v1.44h-1.44zM344.04 838.24h1.44v1.44h-1.44zM344.04 842.55h1.44v1.44h-1.44zM344.04 843.98h1.44v1.44h-1.44zM344.04 845.42h1.44v1.44h-1.44zM344.04 848.29h1.44v1.44h-1.44zM344.04 852.59h1.44v1.44h-1.44zM344.04 854.03h1.44v1.44h-1.44zM344.04 858.33h1.44v1.44h-1.44zM344.04 861.20h1.44v1.44h-1.44zM344.04 862.64h1.44v1.44h-1.44zM344.04 864.07h1.44v1.44h-1.44zM344.04 871.25h1.44v1.44h-1.44zM344.04 872.68h1.44v1.44h-1.44zM344.04 874.12h1.44v1.44h-1.44zM344.04 878.42h1.44v1.44h-1.44zM344.04 879.86h1.44v1.44h-1.44zM344.04 881.29h1.44v1.44h-1.44zM344.04 882.73h1.44v1.44h-1.44zM345.48 832.50h1.44v1.44h-1.44zM345.48 841.11h1.44v1.44h-1.44zM345.48 842.55h1.44v1.44h-1.44zM345.48 843.98h1.44v1.44h-1.44zM345.48 846.85h1.44v1.44h-1.44zM345.48 848.29h1.44v1.44h-1.44zM345.48 851.16h1.44v1.44h-1.44zM345.48 852.59h1.44v1.44h-1.44zM345.48 854.03h1.44v1.44h-1.44zM345.48 856.90h1.44v1.44h-1.44zM345.48 862.64h1.44v1.44h-1.44zM345.48 864.07h1.44v1.44h-1.44zM345.48 865.51h1.44v1.44h-1.44zM345.48 866.94h1.44v1.44h-1.44zM345.48 869.81h1.44v1.44h-1.44zM345.48 871.25h1.44v1.44h-1.44zM345.48 872.68h1.44v1.44h-1.44zM345.48 881.29h1.44v1.44h-1.44zM345.48 884.16h1.44v1.44h-1.44zM346.91 833.94h1.44v1.44h-1.44zM346.91 836.81h1.44v1.44h-1.44zM346.91 838.24h1.44v1.44h-1.44zM346.91 839.68h1.44v1.44h-1.44zM346.91 841.11h1.44v1.44h-1.44zM346.91 845.42h1.44v1.44h-1.44zM346.91 846.85h1.44v1.44h-1.44zM346.91 851.16h1.44v1.44h-1.44zM346.91 856.90h1.44v1.44h-1.44zM346.91 858.33h1.44v1.44h-1.44zM346.91 864.07h1.44v1.44h-1.44zM346.91 865.51h1.44v1.44h-1.44zM346.91 866.94h1.44v1.44h-1.44zM346.91 868.38h1.44v1.44h-1.44zM346.91 874.12h1.44v1.44h-1.44zM346.91 876.99h1.44v1.44h-1.44zM346.91 878.42h1.44v1.44h-1.44zM346.91 882.73h1.44v1.44h-1.44zM348.35 833.94h1.44v1.44h-1.44zM348.35 835.37h1.44v1.44h-1.44zM348.35 836.81h1.44v1.44h-1.44zM348.35 838.24h1.44v1.44h-1.44zM348.35 839.68h1.44v1.44h-1.44zM348.35 843.98h1.44v1.44h-1.44zM348.35 845.42h1.44v1.44h-1.44zM348.35 846.85h1.44v1.44h-1.44zM348.35 849.72h1.44v1.44h-1.44zM348.35 851.16h1.44v1.44h-1.44zM348.35 852.59h1.44v1.44h-1.44zM348.35 856.90h1.44v1.44h-1.44zM348.35 858.33h1.44v1.44h-1.44zM348.35 859.77h1.44v1.44h-1.44zM348.35 864.07h1.44v1.44h-1.44zM348.35 865.51h1.44v1.44h-1.44zM348.35 868.38h1.44v1.44h-1.44zM348.35 869.81h1.44v1.44h-1.44zM348.35 871.25h1.44v1.44h-1.44zM348.35 874.12h1.44v1.44h-1.44zM348.35 876.99h1.44v1.44h-1.44zM348.35 878.42h1.44v1.44h-1.44zM348.35 882.73h1.44v1.44h-1.44zM348.35 884.16h1.44v1.44h-1.44zM349.78 833.94h1.44v1.44h-1.44zM349.78 835.37h1.44v1.44h-1.44zM349.78 838.24h1.44v1.44h-1.44zM349.78 841.11h1.44v1.44h-1.44zM349.78 843.98h1.44v1.44h-1.44zM349.78 845.42h1.44v1.44h-1.44zM349.78 846.85h1.44v1.44h-1.44zM349.78 852.59h1.44v1.44h-1.44zM349.78 855.46h1.44v1.44h-1.44zM349.78 858.33h1.44v1.44h-1.44zM349.78 859.77h1.44v1.44h-1.44zM349.78 864.07h1.44v1.44h-1.44zM349.78 865.51h1.44v1.44h-1.44zM349.78 869.81h1.44v1.44h-1.44zM349.78 871.25h1.44v1.44h-1.44zM349.78 875.55h1.44v1.44h-1.44zM349.78 876.99h1.44v1.44h-1.44zM349.78 879.86h1.44v1.44h-1.44zM351.22 843.98h1.44v1.44h-1.44zM351.22 846.85h1.44v1.44h-1.44zM351.22 848.29h1.44v1.44h-1.44zM351.22 852.59h1.44v1.44h-1.44zM351.22 854.03h1.44v1.44h-1.44zM351.22 855.46h1.44v1.44h-1.44zM351.22 858.33h1.44v1.44h-1.44zM351.22 859.77h1.44v1.44h-1.44zM351.22 861.20h1.44v1.44h-1.44zM351.22 865.51h1.44v1.44h-1.44zM351.22 869.81h1.44v1.44h-1.44zM351.22 872.68h1.44v1.44h-1.44zM351.22 878.42h1.44v1.44h-1.44zM351.22 879.86h1.44v1.44h-1.44zM351.22 882.73h1.44v1.44h-1.44zM352.65 832.50h1.44v1.44h-1.44zM352.65 833.94h1.44v1.44h-1.44zM352.65 835.37h1.44v1.44h-1.44zM352.65 836.81h1.44v1.44h-1.44zM352.65 838.24h1.44v1.44h-1.44zM352.65 839.68h1.44v1.44h-1.44zM352.65 841.11h1.44v1.44h-1.44zM352.65 843.98h1.44v1.44h-1.44zM352.65 845.42h1.44v1.44h-1.44zM352.65 846.85h1.44v1.44h-1.44zM352.65 849.72h1.44v1.44h-1.44zM352.65 851.16h1.44v1.44h-1.44zM352.65 855.46h1.44v1.44h-1.44zM352.65 856.90h1.44v1.44h-1.44zM352.65 858.33h1.44v1.44h-1.44zM352.65 859.77h1.44v1.44h-1.44zM352.65 861.20h1.44v1.44h-1.44zM352.65 862.64h1.44v1.44h-1.44zM352.65 864.07h1.44v1.44h-1.44zM352.65 865.51h1.44v1.44h-1.44zM352.65 868.38h1.44v1.44h-1.44zM352.65 871.25h1.44v1.44h-1.44zM352.65 876.99h1.44v1.44h-1.44zM352.65 879.86h1.44v1.44h-1.44zM352.65 882.73h1.44v1.44h-1.44zM354.09 832.50h1.44v1.44h-1.44zM354.09 841.11h1.44v1.44h-1.44zM354.09 848.29h1.44v1.44h-1.44zM354.09 851.16h1.44v1.44h-1.44zM354.09 855.46h1.44v1.44h-1.44zM354.09 859.77h1.44v1.44h-1.44zM354.09 861.20h1.44v1.44h-1.44zM354.09 864.07h1.44v1.44h-1.44zM354.09 866.94h1.44v1.44h-1.44zM354.09 869.81h1.44v1.44h-1.44zM354.09 874.12h1.44v1.44h-1.44zM354.09 875.55h1.44v1.44h-1.44zM354.09 878.42h1.44v1.44h-1.44zM354.09 879.86h1.44v1.44h-1.44zM354.09 881.29h1.44v1.44h-1.44zM354.09 882.73h1.44v1.44h-1.44zM355.52 832.50h1.44v1.44h-1.44zM355.52 835.37h1.44v1.44h-1.44zM355.52 836.81h1.44v1.44h-1.44zM355.52 838.24h1.44v1.44h-1.44zM355.52 841.11h1.44v1.44h-1.44zM355.52 846.85h1.44v1.44h-1.44zM355.52 849.72h1.44v1.44h-1.44zM355.52 854.03h1.44v1.44h-1.44zM355.52 861.20h1.44v1.44h-1.44zM355.52 865.51h1.44v1.44h-1.44zM355.52 868.38h1.44v1.44h-1.44zM355.52 872.68h1.44v1.44h-1.44zM355.52 875.55h1.44v1.44h-1.44zM355.52 876.99h1.44v1.44h-1.44zM355.52 879.86h1.44v1.44h-1.44zM355.52 882.73h1.44v1.44h-1.44zM356.96 832.50h1.44v1.44h-1.44zM356.96 835.37h1.44v1.44h-1.44zM356.96 836.81h1.44v1.44h-1.44zM356.96 838.24h1.44v1.44h-1.44zM356.96 841.11h1.44v1.44h-1.44zM356.96 848.29h1.44v1.44h-1.44zM356.96 849.72h1.44v1.44h-1.44zM356.96 851.16h1.44v1.44h-1.44zM356.96 852.59h1.44v1.44h-1.44zM356.96 855.46h1.44v1.44h-1.44zM356.96 859.77h1.44v1.44h-1.44zM356.96 861.20h1.44v1.44h-1.44zM356.96 864.07h1.44v1.44h-1.44zM356.96 865.51h1.44v1.44h-1.44zM356.96 866.94h1.44v1.44h-1.44zM356.96 868.38h1.44v1.44h-1.44zM356.96 869.81h1.44v1.44h-1.44zM356.96 871.25h1.44v1.44h-1.44zM356.96 875.55h1.44v1.44h-1.44zM356.96 878.42h1.44v1.44h-1.44zM356.96 879.86h1.44v1.44h-1.44zM356.96 882.73h1.44v1.44h-1.44zM356.96 884.16h1.44v1.44h-1.44zM358.39 832.50h1.44v1.44h-1.44zM358.39 835.37h1.44v1.44h-1.44zM358.39 836.81h1.44v1.44h-1.44zM358.39 838.24h1.44v1.44h-1.44zM358.39 841.11h1.44v1.44h-1.44zM358.39 843.98h1.44v1.44h-1.44zM358.39 849.72h1.44v1.44h-1.44zM358.39 851.16h1.44v1.44h-1.44zM358.39 852.59h1.44v1.44h-1.44zM358.39 856.90h1.44v1.44h-1.44zM358.39 859.77h1.44v1.44h-1.44zM358.39 864.07h1.44v1.44h-1.44zM358.39 866.94h1.44v1.44h-1.44zM358.39 869.81h1.44v1.44h-1.44zM358.39 871.25h1.44v1.44h-1.44zM358.39 872.68h1.44v1.44h-1.44zM358.39 875.55h1.44v1.44h-1.44zM358.39 879.86h1.44v1.44h-1.44zM358.39 881.29h1.44v1.44h-1.44zM359.83 832.50h1.44v1.44h-1.44zM359.83 841.11h1.44v1.44h-1.44zM359.83 846.85h1.44v1.44h-1.44zM359.83 848.29h1.44v1.44h-1.44zM359.83 849.72h1.44v1.44h-1.44zM359.83 851.16h1.44v1.44h-1.44zM359.83 856.90h1.44v1.44h-1.44zM359.83 861.20h1.44v1.44h-1.44zM359.83 864.07h1.44v1.44h-1.44zM359.83 865.51h1.44v1.44h-1.44zM359.83 866.94h1.44v1.44h-1.44zM359.83 868.38h1.44v1.44h-1.44zM359.83 869.81h1.44v1.44h-1.44zM359.83 871.25h1.44v1.44h-1.44zM359.83 878.42h1.44v1.44h-1.44zM359.83 881.29h1.44v1.44h-1.44zM361.26 832.50h1.44v1.44h-1.44zM361.26 833.94h1.44v1.44h-1.44zM361.26 835.37h1.44v1.44h-1.44zM361.26 836.81h1.44v1.44h-1.44zM361.26 838.24h1.44v1.44h-1.44zM361.26 839.68h1.44v1.44h-1.44zM361.26 841.11h1.44v1.44h-1.44zM361.26 843.98h1.44v1.44h-1.44zM361.26 848.29h1.44v1.44h-1.44zM361.26 851.16h1.44v1.44h-1.44zM361.26 852.59h1.44v1.44h-1.44zM361.26 854.03h1.44v1.44h-1.44zM361.26 859.77h1.44v1.44h-1.44zM361.26 862.64h1.44v1.44h-1.44zM361.26 864.07h1.44v1.44h-1.44zM361.26 872.68h1.44v1.44h-1.44zM361.26 878.42h1.44v1.44h-1.44zM361.26 882.73h1.44v1.44h-1.44zM361.26 884.16h1.44v1.44h-1.44z" fill="#111" shape-rendering="crispEdges"/></svg>
<div class="t" style="left:311.4px;top:889.34px;font-size:4.8px;line-height:4.8px;font-weight:bold;color:#1c1c1c;letter-spacing:0.383px;">QR Platba</div>
<div style="position:absolute;left:425.1px;top:827.6px;width:341px;height:1.3px;background:#1c1c1c;"></div>
<div style="position:absolute;left:707px;top:827.6px;width:1.3px;height:62px;background:#1c1c1c;"></div>
<div style="position:absolute;left:425.1px;top:867px;width:341px;height:1px;background:#1c1c1c;"></div>
<div style="position:absolute;left:425.1px;top:888.8px;width:341px;height:2px;background:#1c1c1c;"></div>
<div class="t" style="left:428.1px;top:831.45px;font-size:6.2px;line-height:6.2px;font-weight:bold;color:#1c1c1c;letter-spacing:0.066px;">Částky v CZK</div>
<div class="t" style="left:-403.09px;width:1000px;text-align:right;top:831.45px;font-size:6.2px;line-height:6.2px;font-weight:bold;color:#1c1c1c;letter-spacing:0.11px;">Bez DPH</div>
<div class="t" style="left:-352.045px;width:1000px;text-align:right;top:831.45px;font-size:6.2px;line-height:6.2px;font-weight:bold;color:#1c1c1c;letter-spacing:0.055px;">DPH</div>
<div class="t" style="left:-295.722px;width:1000px;text-align:right;top:831.45px;font-size:6.2px;line-height:6.2px;font-weight:bold;color:#1c1c1c;letter-spacing:0.078px;">Celkem s DPH</div>
<div class="t" style="left:-236.922px;width:1000px;text-align:right;top:831.45px;font-size:6.2px;line-height:6.2px;font-weight:bold;color:#1c1c1c;letter-spacing:0.078px;">Celkem v EUR</div>
<div class="t" style="left:428.1px;top:846.34px;font-size:7.4px;line-height:7.4px;color:#1c1c1c;letter-spacing:-0.138px;">Základní sazba 21%</div>
<div class="t" style="left:-403.304px;width:1000px;text-align:right;top:846.34px;font-size:7.4px;line-height:7.4px;color:#1c1c1c;letter-spacing:-0.104px;">197 499,95</div>
<div class="t" style="left:-352.215px;width:1000px;text-align:right;top:846.34px;font-size:7.4px;line-height:7.4px;color:#1c1c1c;letter-spacing:-0.115px;">41 485,51</div>
<div class="t" style="left:-295.926px;width:1000px;text-align:right;top:846.34px;font-size:7.4px;line-height:7.4px;color:#1c1c1c;letter-spacing:-0.126px;">238 985,46</div>
<div class="t" style="left:-237.144px;width:1000px;text-align:right;top:846.34px;font-size:7.4px;line-height:7.4px;color:#1c1c1c;letter-spacing:-0.144px;">9 073,10</div>
<div class="t" style="left:428.1px;top:856.44px;font-size:7.4px;line-height:7.4px;font-weight:bold;color:#1c1c1c;letter-spacing:-0.205px;">Celkem</div>
<div class="t" style="left:-403.304px;width:1000px;text-align:right;top:856.44px;font-size:7.4px;line-height:7.4px;font-weight:bold;color:#1c1c1c;letter-spacing:-0.104px;">197 499,95</div>
<div class="t" style="left:-352.215px;width:1000px;text-align:right;top:856.44px;font-size:7.4px;line-height:7.4px;font-weight:bold;color:#1c1c1c;letter-spacing:-0.115px;">41 485,51</div>
<div class="t" style="left:-295.926px;width:1000px;text-align:right;top:856.44px;font-size:7.4px;line-height:7.4px;font-weight:bold;color:#1c1c1c;letter-spacing:-0.126px;">238 985,46</div>
<div class="t" style="left:-237.144px;width:1000px;text-align:right;top:856.44px;font-size:7.4px;line-height:7.4px;font-weight:bold;color:#1c1c1c;letter-spacing:-0.144px;">9 073,10</div>
<div class="t" style="left:428.1px;top:869.14px;font-size:7.4px;line-height:7.4px;color:#1c1c1c;letter-spacing:-0.112px;">Zaokrouhlení nezahmuté do základu daně</div>
<div class="t" style="left:-295.917px;width:1000px;text-align:right;top:869.14px;font-size:7.4px;line-height:7.4px;color:#1c1c1c;letter-spacing:-0.117px;">-2,63</div>
<div class="t" style="left:-237.242px;width:1000px;text-align:right;top:869.14px;font-size:7.4px;line-height:7.4px;color:#1c1c1c;letter-spacing:-0.242px;">-0,10</div>
<div class="t" style="left:428.1px;top:879.24px;font-size:7.4px;line-height:7.4px;color:#1c1c1c;letter-spacing:-0.122px;">Na zálohách zaplaceno</div>
<div class="t" style="left:-295.968px;width:1000px;text-align:right;top:879.24px;font-size:7.4px;line-height:7.4px;color:#1c1c1c;letter-spacing:-0.168px;">0,00</div>
<div class="t" style="left:-237.101px;width:1000px;text-align:right;top:879.24px;font-size:7.4px;line-height:7.4px;color:#1c1c1c;letter-spacing:-0.101px;">0,00</div>
<div class="t" style="left:428.1px;top:896.97px;font-size:10.9px;line-height:10.9px;font-weight:bold;color:#1c1c1c;letter-spacing:-0.057px;">Částka k úhradě v EUR</div>
<div class="t" style="left:-237.104px;width:1000px;text-align:right;top:896.97px;font-size:10.9px;line-height:10.9px;font-weight:bold;color:#1c1c1c;letter-spacing:-0.104px;">9 073,00</div>
<div class="t" style="left:428.1px;top:911.55px;font-size:4.9px;line-height:4.9px;color:#1c1c1c;letter-spacing:0.237px;">Základem pro výpočet daně je částka "Bez DPH".</div>
<div style="position:absolute;left:305px;top:970.3px;width:151px;height:0;border-top:1px dotted #555"></div>
<div style="position:absolute;left:500px;top:970.3px;width:261px;height:0;border-top:1px dotted #555"></div>
<div class="t" style="left:307.6px;top:973.71px;font-size:5.3px;line-height:5.3px;color:#1c1c1c;letter-spacing:0.047px;">Razítko a podpis:</div>
<div class="t" style="left:502.1px;top:973.71px;font-size:5.3px;line-height:5.3px;color:#1c1c1c;letter-spacing:0.033px;">Převzal(a), dne:</div>
<div class="t" style="left:307.6px;top:992.61px;font-size:5.3px;line-height:5.3px;color:#1c1c1c;letter-spacing:0.072px;">Vystavil: Jaroslav Novák</div>
<div class="t" style="left:380.9px;top:992.61px;font-size:5.3px;line-height:5.3px;color:#1c1c1c;letter-spacing:0.061px;">Mob.: +420 602 603 604</div>
<div class="t" style="left:454.9px;top:992.61px;font-size:5.3px;line-height:5.3px;color:#1c1c1c;letter-spacing:0.073px;">Tel.: +420 257 312 432</div>
<div class="t" style="left:525.6px;top:992.61px;font-size:5.3px;line-height:5.3px;color:#1c1c1c;letter-spacing:0.055px;">E-mail: info@demoverze.cz</div>
<div class="t" style="left:607px;top:992.61px;font-size:5.3px;line-height:5.3px;color:#1c1c1c;letter-spacing:0.085px;">Web: www.demoverze.cz</div>
<div style="position:absolute;left:305px;top:1003.8px;width:461.8px;height:1.5px;background:#1c1c1c;"></div>
<div class="t" style="left:-236.602px;width:1000px;text-align:right;top:1007.12px;font-size:6px;line-height:6px;color:#1c1c1c;letter-spacing:0.398px;">1 z 1</div>
<div class="t" style="left:307.6px;top:1009.45px;font-size:6.2px;line-height:6.2px;color:#1c1c1c;letter-spacing:-0.396px;">Vystaveno v systému <b>ABRA</b></div>
</div>
<div style="position:absolute;left:848px;top:99px;width:932px;height:914px;background:#d0d0d0;"></div>
<div class="t" style="left:876px;top:115.3px;font-size:13px;line-height:13px;letter-spacing:-0.264px;">Začínáme...</div>
<div style="position:absolute;left:931px;top:127.2px;width:4.5px;height:1px;background:#000;"></div>
<div class="t" style="left:993px;top:115.3px;font-size:13px;line-height:13px;letter-spacing:-0.457px;">Omezení</div>
<div style="position:absolute;left:993.2px;top:128.2px;width:9.5px;height:1px;background:#000;"></div>
<div class="t" style="left:1094.3px;top:115.3px;font-size:13px;line-height:13px;letter-spacing:-0.398px;">Seznam</div>
<div style="position:absolute;left:1108.5px;top:128.2px;width:6.5px;height:1px;background:#000;"></div>
<div class="t" style="left:1195px;top:115.3px;font-size:13px;line-height:13px;letter-spacing:-0.307px;">Detail</div>
<div style="position:absolute;left:1195.2px;top:128.2px;width:8.5px;height:1px;background:#000;"></div>
<div class="t" style="left:1281.3px;top:115.3px;font-size:13px;line-height:13px;letter-spacing:-0.155px;">Ochrana dat</div>
<div class="t" style="left:1402.5px;top:115.3px;font-size:13px;line-height:13px;letter-spacing:-0.244px;">X-vazby</div>
<div style="position:absolute;left:1402.5px;top:128.2px;width:8px;height:1px;background:#000;"></div>
<div style="position:absolute;left:1083.8px;top:133.8px;width:66.2px;height:3px;background:#e8456b;"></div>
<div style="position:absolute;left:858px;top:144px;width:912px;height:61px;background:#fff;"></div>
<div style="position:absolute;left:868px;top:155px;width:110px;height:20px;background:#cfe0f4;border-radius:2px;"></div>
<div class="t" style="left:871px;top:159.99px;font-size:11px;line-height:11px;color:#111;letter-spacing:-0.272px;">Vybrané omezení</div>
<svg style="position:absolute;left:960px;top:158px;" width="20" height="14" viewBox="960 158 20 14"><path d="M965.5 162.5H973L969.25 167.5Z" fill="#111"/></svg>
<div class="t" style="left:987px;top:159.48px;font-size:11.6px;line-height:11.6px;font-weight:bold;letter-spacing:0.034px;">Všechny účetní žádosti</div>
<svg style="position:absolute;left:865px;top:180px;" width="22" height="22" viewBox="865 180 22 22"><polygon points="875.90,183.20 878.31,188.28 883.89,189.00 879.80,192.87 880.84,198.40 875.90,195.70 870.96,198.40 872.00,192.87 867.91,189.00 873.49,188.28" fill="#1a67c9" stroke="#1a67c9" stroke-width="0.8" stroke-linejoin="round"/></svg>
<div class="t" style="left:893.3px;top:185.68px;font-size:11.6px;line-height:11.6px;font-weight:bold;color:#e8456b;letter-spacing:0.01px;">Všechny účetní žádosti</div>
<div style="position:absolute;left:890.5px;top:196.6px;width:131.3px;height:1.2px;background:#e8456b;"></div>
<div class="t" style="left:867.7px;top:213.39px;font-size:11px;line-height:11px;letter-spacing:-0.549px;">Záznam:</div>
<div class="t" style="left:914.3px;top:212.97px;font-size:11.5px;line-height:11.5px;font-weight:bold;">20</div>
<div class="t" style="left:933px;top:213.39px;font-size:11px;line-height:11px;">z</div>
<div class="t" style="left:943px;top:212.97px;font-size:11.5px;line-height:11.5px;font-weight:bold;">62</div>
<div style="position:absolute;left:858px;top:232px;width:912px;height:771px;background:#fff;"></div>
<div class="t" style="left:883.9px;top:246.39px;font-size:11px;line-height:11px;color:#111;letter-spacing:0.019px;">Datum...</div>
<div style="position:absolute;left:933.2px;top:247.4px;width:6.8px;height:6.8px;background:transparent;border:1.3px solid #111;box-sizing:border-box;"></div>
<div style="position:absolute;left:943px;top:240px;width:1px;height:22px;background:#d6d6d6;"></div>
<div class="t" style="left:947.8px;top:246.39px;font-size:11px;line-height:11px;color:#111;letter-spacing:-0.413px;">Číslo dokladu</div>
<div style="position:absolute;left:1014.2px;top:247.4px;width:6.8px;height:6.8px;background:transparent;border:1.3px solid #111;box-sizing:border-box;"></div>
<div style="position:absolute;left:1037.3px;top:240px;width:1px;height:22px;background:#d6d6d6;"></div>
<div class="t" style="left:1042px;top:246.39px;font-size:11px;line-height:11px;color:#111;letter-spacing:-0.078px;">Text účetního zápisu</div>
<div style="position:absolute;left:1145.2px;top:247.4px;width:6.8px;height:6.8px;background:transparent;border:1.3px solid #111;box-sizing:border-box;"></div>
<div style="position:absolute;left:1374.3px;top:240px;width:1px;height:22px;background:#d6d6d6;"></div>
<div class="t" style="left:1380.6px;top:246.39px;font-size:11px;line-height:11px;color:#111;letter-spacing:-0.081px;">Částka (dokl.)</div>
<div style="position:absolute;left:1454.4px;top:247.4px;width:6.8px;height:6.8px;background:transparent;border:1.3px solid #111;box-sizing:border-box;"></div>
<div style="position:absolute;left:1464px;top:240px;width:1px;height:22px;background:#d6d6d6;"></div>
<div class="t" style="left:1476.4px;top:246.39px;font-size:11px;line-height:11px;color:#111;letter-spacing:-0.036px;">Částka (lok.)</div>
<div style="position:absolute;left:1544.3px;top:247.4px;width:6.8px;height:6.8px;background:transparent;border:1.3px solid #111;box-sizing:border-box;"></div>
<div style="position:absolute;left:1554.3px;top:240px;width:1px;height:22px;background:#d6d6d6;"></div>
<div class="t" style="left:1558.3px;top:246.39px;font-size:11px;line-height:11px;color:#111;letter-spacing:-0.38px;">Účet MD</div>
<div style="position:absolute;left:1618.4px;top:240px;width:1px;height:22px;background:#d6d6d6;"></div>
<div class="t" style="left:1622.4px;top:246.39px;font-size:11px;line-height:11px;color:#111;letter-spacing:0.438px;">Stř. ...</div>
<div style="position:absolute;left:1659.4px;top:240px;width:1px;height:22px;background:#d6d6d6;"></div>
<div class="t" style="left:1663.3px;top:246.39px;font-size:11px;line-height:11px;color:#111;letter-spacing:-0.244px;">Účet D</div>
<div style="position:absolute;left:1723.2px;top:240px;width:1px;height:22px;background:#d6d6d6;"></div>
<div class="t" style="left:1727.4px;top:246.39px;font-size:11px;line-height:11px;color:#111;letter-spacing:0.332px;">S...</div>
<div style="position:absolute;left:880px;top:266.5px;width:868px;height:25.5px;background:#d8d3ec;"></div>
<div style="position:absolute;left:863px;top:266px;width:885px;height:1px;background:#c9c5dd;"></div>
<div style="position:absolute;left:885px;top:266px;width:54.5px;height:26px;overflow:hidden">
<div class="t" style="left:0.7px;top:8.59px;font-size:11px;line-height:11px;color:#111;letter-spacing:0.25px;">12.09.2023</div>
</div>
<div class="t" style="left:948.2px;top:274.59px;font-size:11px;line-height:11px;color:#111;letter-spacing:-0.2px;">FV-5/2023</div>
<div class="t" style="left:1042px;top:274.59px;font-size:11px;line-height:11px;color:#111;letter-spacing:-0.2px;">Tržba za Zboží</div>
<div class="t" style="left:457.8px;width:1000px;text-align:right;top:274.59px;font-size:11px;line-height:11px;color:#111;letter-spacing:-0.2px;">40 491,74 CZK</div>
<div class="t" style="left:547.7px;width:1000px;text-align:right;top:274.59px;font-size:11px;line-height:11px;color:#111;letter-spacing:-0.2px;">40 491,74 CZK</div>
<div class="t" style="left:1560px;top:274.59px;font-size:11px;line-height:11px;color:#111;letter-spacing:-0.2px;">311000</div>
<div class="t" style="left:1623.5px;top:274.59px;font-size:11px;line-height:11px;color:#111;letter-spacing:-0.2px;">000</div>
<div class="t" style="left:1664.6px;top:274.59px;font-size:11px;line-height:11px;color:#111;letter-spacing:-0.2px;">604000</div>
<div class="t" style="left:1728.5px;top:274.59px;font-size:11px;line-height:11px;color:#111;letter-spacing:-0.2px;">000</div>
<div style="position:absolute;left:863px;top:292px;width:885px;height:1px;background:#cccccc;"></div>
<div style="position:absolute;left:885px;top:292px;width:54.5px;height:26px;overflow:hidden">
<div class="t" style="left:0.7px;top:8.59px;font-size:11px;line-height:11px;color:#111;letter-spacing:0.25px;">28.09.2023</div>
</div>
<div class="t" style="left:948.2px;top:300.59px;font-size:11px;line-height:11px;color:#111;letter-spacing:-0.2px;">FV-6/2023</div>
<div class="t" style="left:1042px;top:300.59px;font-size:11px;line-height:11px;color:#111;letter-spacing:-0.2px;">DPH výstup 21%</div>
<div class="t" style="left:457.8px;width:1000px;text-align:right;top:300.59px;font-size:11px;line-height:11px;color:#111;letter-spacing:-0.2px;">1 908,92 CZK</div>
<div class="t" style="left:547.7px;width:1000px;text-align:right;top:300.59px;font-size:11px;line-height:11px;color:#111;letter-spacing:-0.2px;">1 908,92 CZK</div>
<div class="t" style="left:1560px;top:300.59px;font-size:11px;line-height:11px;color:#111;letter-spacing:-0.2px;">311000</div>
<div class="t" style="left:1623.5px;top:300.59px;font-size:11px;line-height:11px;color:#111;letter-spacing:-0.2px;">000</div>
<div class="t" style="left:1664.6px;top:300.59px;font-size:11px;line-height:11px;color:#111;letter-spacing:-0.2px;">343210</div>
<div class="t" style="left:1728.5px;top:300.59px;font-size:11px;line-height:11px;color:#111;letter-spacing:-0.2px;">000</div>
<div style="position:absolute;left:863px;top:318px;width:885px;height:1px;background:#cccccc;"></div>
<div style="position:absolute;left:885px;top:318px;width:54.5px;height:26px;overflow:hidden">
<div class="t" style="left:0.7px;top:8.59px;font-size:11px;line-height:11px;color:#111;letter-spacing:0.25px;">28.09.2023</div>
</div>
<div class="t" style="left:948.2px;top:326.59px;font-size:11px;line-height:11px;color:#111;letter-spacing:-0.2px;">FV-6/2023</div>
<div class="t" style="left:1042px;top:326.59px;font-size:11px;line-height:11px;color:#111;letter-spacing:-0.2px;">Tržba za Zboží</div>
<div class="t" style="left:457.8px;width:1000px;text-align:right;top:326.59px;font-size:11px;line-height:11px;color:#111;letter-spacing:-0.2px;">9 090,08 CZK</div>
<div class="t" style="left:547.7px;width:1000px;text-align:right;top:326.59px;font-size:11px;line-height:11px;color:#111;letter-spacing:-0.2px;">9 090,08 CZK</div>
<div class="t" style="left:1560px;top:326.59px;font-size:11px;line-height:11px;color:#111;letter-spacing:-0.2px;">311000</div>
<div class="t" style="left:1623.5px;top:326.59px;font-size:11px;line-height:11px;color:#111;letter-spacing:-0.2px;">000</div>
<div class="t" style="left:1664.6px;top:326.59px;font-size:11px;line-height:11px;color:#111;letter-spacing:-0.2px;">604000</div>
<div class="t" style="left:1728.5px;top:326.59px;font-size:11px;line-height:11px;color:#111;letter-spacing:-0.2px;">000</div>
<div style="position:absolute;left:863px;top:344.5px;width:885px;height:25.5px;background:#b4b4b4;"></div>
<div style="position:absolute;left:863px;top:344px;width:885px;height:1px;background:#cccccc;"></div>
<div style="position:absolute;left:885px;top:344px;width:54.5px;height:26px;overflow:hidden">
<div class="t" style="left:0.7px;top:8.59px;font-size:11px;line-height:11px;color:#111;letter-spacing:0.25px;">03.10.2023</div>
</div>
<div class="t" style="left:948.2px;top:352.59px;font-size:11px;line-height:11px;color:#111;letter-spacing:-0.2px;">FV-9/2023</div>
<div class="t" style="left:1042px;top:352.59px;font-size:11px;line-height:11px;color:#111;letter-spacing:-0.2px;">DPH výstup 21%</div>
<div class="t" style="left:457.8px;width:1000px;text-align:right;top:352.59px;font-size:11px;line-height:11px;color:#111;letter-spacing:-0.2px;">1 575,00 EUR</div>
<div class="t" style="left:547.7px;width:1000px;text-align:right;top:352.59px;font-size:11px;line-height:11px;color:#111;letter-spacing:-0.2px;">41 485,51 CZK</div>
<div class="t" style="left:1560px;top:352.59px;font-size:11px;line-height:11px;color:#111;letter-spacing:-0.2px;">311000</div>
<div class="t" style="left:1623.5px;top:352.59px;font-size:11px;line-height:11px;color:#111;letter-spacing:-0.2px;">000</div>
<div class="t" style="left:1664.6px;top:352.59px;font-size:11px;line-height:11px;color:#111;letter-spacing:-0.2px;">343210</div>
<div class="t" style="left:1728.5px;top:352.59px;font-size:11px;line-height:11px;color:#111;letter-spacing:-0.2px;">000</div>
<div style="position:absolute;left:880px;top:370.5px;width:868px;height:25.5px;background:#d8d3ec;"></div>
<div style="position:absolute;left:863px;top:370px;width:885px;height:1px;background:#c9c5dd;"></div>
<div style="position:absolute;left:885px;top:370px;width:54.5px;height:26px;overflow:hidden">
<div class="t" style="left:0.7px;top:8.59px;font-size:11px;line-height:11px;color:#111;letter-spacing:0.25px;">03.10.2023</div>
</div>
<div class="t" style="left:948.2px;top:378.59px;font-size:11px;line-height:11px;color:#111;letter-spacing:-0.2px;">FV-9/2023</div>
<div class="t" style="left:1042px;top:378.59px;font-size:11px;line-height:11px;color:#111;letter-spacing:-0.2px;">Tržba za Zboží</div>
<div class="t" style="left:457.8px;width:1000px;text-align:right;top:378.59px;font-size:11px;line-height:11px;color:#111;letter-spacing:-0.2px;">7 498,10 EUR</div>
<div class="t" style="left:547.7px;width:1000px;text-align:right;top:378.59px;font-size:11px;line-height:11px;color:#111;letter-spacing:-0.2px;">197 499,95 CZK</div>
<div class="t" style="left:1560px;top:378.59px;font-size:11px;line-height:11px;color:#111;letter-spacing:-0.2px;">311000</div>
<div class="t" style="left:1623.5px;top:378.59px;font-size:11px;line-height:11px;color:#111;letter-spacing:-0.2px;">000</div>
<div class="t" style="left:1664.6px;top:378.59px;font-size:11px;line-height:11px;color:#111;letter-spacing:-0.2px;">604000</div>
<div class="t" style="left:1728.5px;top:378.59px;font-size:11px;line-height:11px;color:#111;letter-spacing:-0.2px;">000</div>
<div style="position:absolute;left:880px;top:396.5px;width:868px;height:25.5px;background:#d8d3ec;"></div>
<div style="position:absolute;left:863px;top:396px;width:885px;height:1px;background:#c9c5dd;"></div>
<div style="position:absolute;left:885px;top:396px;width:54.5px;height:26px;overflow:hidden">
<div class="t" style="left:0.7px;top:8.59px;font-size:11px;line-height:11px;color:#111;letter-spacing:0.25px;">03.10.2023</div>
</div>
<div class="t" style="left:948.2px;top:404.59px;font-size:11px;line-height:11px;color:#111;letter-spacing:-0.2px;">FV-9/2023</div>
<div class="t" style="left:1042px;top:404.59px;font-size:11px;line-height:11px;color:#111;letter-spacing:-0.2px;">Zaokrouhlení</div>
<div class="t" style="left:457.8px;width:1000px;text-align:right;top:404.59px;font-size:11px;line-height:11px;color:#111;letter-spacing:-0.2px;">-0,10 EUR</div>
<div class="t" style="left:547.7px;width:1000px;text-align:right;top:404.59px;font-size:11px;line-height:11px;color:#111;letter-spacing:-0.2px;">-2,63 CZK</div>
<div class="t" style="left:1560px;top:404.59px;font-size:11px;line-height:11px;color:#111;letter-spacing:-0.2px;">311000</div>
<div class="t" style="left:1623.5px;top:404.59px;font-size:11px;line-height:11px;color:#111;letter-spacing:-0.2px;">000</div>
<div class="t" style="left:1664.6px;top:404.59px;font-size:11px;line-height:11px;color:#111;letter-spacing:-0.2px;">648100</div>
<div class="t" style="left:1728.5px;top:404.59px;font-size:11px;line-height:11px;color:#111;letter-spacing:-0.2px;">000</div>
<div style="position:absolute;left:863px;top:422px;width:885px;height:1px;background:#cccccc;"></div>
<div style="position:absolute;left:885px;top:422px;width:54.5px;height:26px;overflow:hidden">
<div class="t" style="left:0.7px;top:8.59px;font-size:11px;line-height:11px;color:#111;letter-spacing:0.25px;">04.10.2023</div>
</div>
<div class="t" style="left:948.2px;top:430.59px;font-size:11px;line-height:11px;color:#111;letter-spacing:-0.2px;">FV-7/2023</div>
<div class="t" style="left:1042px;top:430.59px;font-size:11px;line-height:11px;color:#111;letter-spacing:-0.2px;">DPH výstup 21%</div>
<div class="t" style="left:457.8px;width:1000px;text-align:right;top:430.59px;font-size:11px;line-height:11px;color:#111;letter-spacing:-0.2px;">10 065,59 CZK</div>
<div class="t" style="left:547.7px;width:1000px;text-align:right;top:430.59px;font-size:11px;line-height:11px;color:#111;letter-spacing:-0.2px;">10 065,59 CZK</div>
<div class="t" style="left:1560px;top:430.59px;font-size:11px;line-height:11px;color:#111;letter-spacing:-0.2px;">311000</div>
<div class="t" style="left:1623.5px;top:430.59px;font-size:11px;line-height:11px;color:#111;letter-spacing:-0.2px;">000</div>
<div class="t" style="left:1664.6px;top:430.59px;font-size:11px;line-height:11px;color:#111;letter-spacing:-0.2px;">343210</div>
<div class="t" style="left:1728.5px;top:430.59px;font-size:11px;line-height:11px;color:#111;letter-spacing:-0.2px;">000</div>
<div style="position:absolute;left:863px;top:448px;width:885px;height:1px;background:#cccccc;"></div>
<div style="position:absolute;left:885px;top:448px;width:54.5px;height:26px;overflow:hidden">
<div class="t" style="left:0.7px;top:8.59px;font-size:11px;line-height:11px;color:#111;letter-spacing:0.25px;">04.10.2023</div>
</div>
<div class="t" style="left:948.2px;top:456.59px;font-size:11px;line-height:11px;color:#111;letter-spacing:-0.2px;">FV-7/2023</div>
<div class="t" style="left:1042px;top:456.59px;font-size:11px;line-height:11px;color:#111;letter-spacing:-0.2px;">Tržba za Zboží</div>
<div class="t" style="left:457.8px;width:1000px;text-align:right;top:456.59px;font-size:11px;line-height:11px;color:#111;letter-spacing:-0.2px;">47 931,40 CZK</div>
<div class="t" style="left:547.7px;width:1000px;text-align:right;top:456.59px;font-size:11px;line-height:11px;color:#111;letter-spacing:-0.2px;">47 931,40 CZK</div>
<div class="t" style="left:1560px;top:456.59px;font-size:11px;line-height:11px;color:#111;letter-spacing:-0.2px;">311000</div>
<div class="t" style="left:1623.5px;top:456.59px;font-size:11px;line-height:11px;color:#111;letter-spacing:-0.2px;">000</div>
<div class="t" style="left:1664.6px;top:456.59px;font-size:11px;line-height:11px;color:#111;letter-spacing:-0.2px;">604000</div>
<div class="t" style="left:1728.5px;top:456.59px;font-size:11px;line-height:11px;color:#111;letter-spacing:-0.2px;">000</div>
<div style="position:absolute;left:880px;top:474.5px;width:868px;height:25.5px;background:#d8d3ec;"></div>
<div style="position:absolute;left:863px;top:474px;width:885px;height:1px;background:#cccccc;"></div>
<div style="position:absolute;left:885px;top:474px;width:54.5px;height:26px;overflow:hidden">
<div class="t" style="left:0.7px;top:8.59px;font-size:11px;line-height:11px;color:#111;letter-spacing:0.25px;">16.10.2023</div>
</div>
<div class="t" style="left:948.2px;top:482.59px;font-size:11px;line-height:11px;color:#111;letter-spacing:-0.2px;">FV-1/2023</div>
<div class="t" style="left:1042px;top:482.59px;font-size:11px;line-height:11px;color:#111;letter-spacing:-0.2px;">DPH výstup 21%</div>
<div class="t" style="left:457.8px;width:1000px;text-align:right;top:482.59px;font-size:11px;line-height:11px;color:#111;letter-spacing:-0.2px;">260,33 CZK</div>
<div class="t" style="left:547.7px;width:1000px;text-align:right;top:482.59px;font-size:11px;line-height:11px;color:#111;letter-spacing:-0.2px;">260,33 CZK</div>
<div class="t" style="left:1560px;top:482.59px;font-size:11px;line-height:11px;color:#111;letter-spacing:-0.2px;">311000</div>
<div class="t" style="left:1623.5px;top:482.59px;font-size:11px;line-height:11px;color:#111;letter-spacing:-0.2px;">000</div>
<div class="t" style="left:1664.6px;top:482.59px;font-size:11px;line-height:11px;color:#111;letter-spacing:-0.2px;">343210</div>
<div class="t" style="left:1728.5px;top:482.59px;font-size:11px;line-height:11px;color:#111;letter-spacing:-0.2px;">000</div>
<div style="position:absolute;left:880px;top:500.5px;width:868px;height:25.5px;background:#d8d3ec;"></div>
<div style="position:absolute;left:863px;top:500px;width:885px;height:1px;background:#c9c5dd;"></div>
<div style="position:absolute;left:885px;top:500px;width:54.5px;height:26px;overflow:hidden">
<div class="t" style="left:0.7px;top:8.59px;font-size:11px;line-height:11px;color:#111;letter-spacing:0.25px;">16.10.2023</div>
</div>
<div class="t" style="left:948.2px;top:508.59px;font-size:11px;line-height:11px;color:#111;letter-spacing:-0.2px;">FV-1/2023</div>
<div class="t" style="left:1042px;top:508.59px;font-size:11px;line-height:11px;color:#111;letter-spacing:-0.2px;">Tržba za Zboží</div>
<div class="t" style="left:457.8px;width:1000px;text-align:right;top:508.59px;font-size:11px;line-height:11px;color:#111;letter-spacing:-0.2px;">1 239,67 CZK</div>
<div class="t" style="left:547.7px;width:1000px;text-align:right;top:508.59px;font-size:11px;line-height:11px;color:#111;letter-spacing:-0.2px;">1 239,67 CZK</div>
<div class="t" style="left:1560px;top:508.59px;font-size:11px;line-height:11px;color:#111;letter-spacing:-0.2px;">311000</div>
<div class="t" style="left:1623.5px;top:508.59px;font-size:11px;line-height:11px;color:#111;letter-spacing:-0.2px;">000</div>
<div class="t" style="left:1664.6px;top:508.59px;font-size:11px;line-height:11px;color:#111;letter-spacing:-0.2px;">604000</div>
<div class="t" style="left:1728.5px;top:508.59px;font-size:11px;line-height:11px;color:#111;letter-spacing:-0.2px;">000</div>
<div style="position:absolute;left:863px;top:526px;width:885px;height:1px;background:#cccccc;"></div>
<div style="position:absolute;left:885px;top:526px;width:54.5px;height:26px;overflow:hidden">
<div class="t" style="left:0.7px;top:8.59px;font-size:11px;line-height:11px;color:#111;letter-spacing:0.25px;">16.10.2023</div>
</div>
<div class="t" style="left:948.2px;top:534.59px;font-size:11px;line-height:11px;color:#111;letter-spacing:-0.2px;">FV-2/2023</div>
<div class="t" style="left:1042px;top:534.59px;font-size:11px;line-height:11px;color:#111;letter-spacing:-0.2px;">DPH výstup 21%</div>
<div class="t" style="left:457.8px;width:1000px;text-align:right;top:534.59px;font-size:11px;line-height:11px;color:#111;letter-spacing:-0.2px;">396,83 CZK</div>
<div class="t" style="left:547.7px;width:1000px;text-align:right;top:534.59px;font-size:11px;line-height:11px;color:#111;letter-spacing:-0.2px;">396,83 CZK</div>
<div class="t" style="left:1560px;top:534.59px;font-size:11px;line-height:11px;color:#111;letter-spacing:-0.2px;">311000</div>
<div class="t" style="left:1623.5px;top:534.59px;font-size:11px;line-height:11px;color:#111;letter-spacing:-0.2px;">000</div>
<div class="t" style="left:1664.6px;top:534.59px;font-size:11px;line-height:11px;color:#111;letter-spacing:-0.2px;">343210</div>
<div class="t" style="left:1728.5px;top:534.59px;font-size:11px;line-height:11px;color:#111;letter-spacing:-0.2px;">000</div>
<div style="position:absolute;left:863px;top:552px;width:885px;height:1px;background:#cccccc;"></div>
<div style="position:absolute;left:885px;top:552px;width:54.5px;height:26px;overflow:hidden">
<div class="t" style="left:0.7px;top:8.59px;font-size:11px;line-height:11px;color:#111;letter-spacing:0.25px;">16.10.2023</div>
</div>
<div class="t" style="left:948.2px;top:560.59px;font-size:11px;line-height:11px;color:#111;letter-spacing:-0.2px;">FV-2/2023</div>
<div class="t" style="left:1042px;top:560.59px;font-size:11px;line-height:11px;color:#111;letter-spacing:-0.2px;">Montáž</div>
<div class="t" style="left:457.8px;width:1000px;text-align:right;top:560.59px;font-size:11px;line-height:11px;color:#111;letter-spacing:-0.2px;">650,00 CZK</div>
<div class="t" style="left:547.7px;width:1000px;text-align:right;top:560.59px;font-size:11px;line-height:11px;color:#111;letter-spacing:-0.2px;">650,00 CZK</div>
<div class="t" style="left:1560px;top:560.59px;font-size:11px;line-height:11px;color:#111;letter-spacing:-0.2px;">311000</div>
<div class="t" style="left:1623.5px;top:560.59px;font-size:11px;line-height:11px;color:#111;letter-spacing:-0.2px;">000</div>
<div class="t" style="left:1664.6px;top:560.59px;font-size:11px;line-height:11px;color:#111;letter-spacing:-0.2px;">602000</div>
<div class="t" style="left:1728.5px;top:560.59px;font-size:11px;line-height:11px;color:#111;letter-spacing:-0.2px;">000</div>
<div style="position:absolute;left:863px;top:578px;width:885px;height:1px;background:#cccccc;"></div>
<div style="position:absolute;left:885px;top:578px;width:54.5px;height:26px;overflow:hidden">
<div class="t" style="left:0.7px;top:8.59px;font-size:11px;line-height:11px;color:#111;letter-spacing:0.25px;">16.10.2023</div>
</div>
<div class="t" style="left:948.2px;top:586.59px;font-size:11px;line-height:11px;color:#111;letter-spacing:-0.2px;">FV-2/2023</div>
<div class="t" style="left:1042px;top:586.59px;font-size:11px;line-height:11px;color:#111;letter-spacing:-0.2px;">Tržba za Zboží</div>
<div class="t" style="left:457.8px;width:1000px;text-align:right;top:586.59px;font-size:11px;line-height:11px;color:#111;letter-spacing:-0.2px;">1 239,67 CZK</div>
<div class="t" style="left:547.7px;width:1000px;text-align:right;top:586.59px;font-size:11px;line-height:11px;color:#111;letter-spacing:-0.2px;">1 239,67 CZK</div>
<div class="t" style="left:1560px;top:586.59px;font-size:11px;line-height:11px;color:#111;letter-spacing:-0.2px;">311000</div>
<div class="t" style="left:1623.5px;top:586.59px;font-size:11px;line-height:11px;color:#111;letter-spacing:-0.2px;">000</div>
<div class="t" style="left:1664.6px;top:586.59px;font-size:11px;line-height:11px;color:#111;letter-spacing:-0.2px;">604000</div>
<div class="t" style="left:1728.5px;top:586.59px;font-size:11px;line-height:11px;color:#111;letter-spacing:-0.2px;">000</div>
<div style="position:absolute;left:880px;top:604.5px;width:868px;height:25.5px;background:#d8d3ec;"></div>
<div style="position:absolute;left:863px;top:604px;width:885px;height:1px;background:#cccccc;"></div>
<div style="position:absolute;left:885px;top:604px;width:54.5px;height:26px;overflow:hidden">
<div class="t" style="left:0.7px;top:8.59px;font-size:11px;line-height:11px;color:#111;letter-spacing:0.25px;">16.10.2023</div>
</div>
<div class="t" style="left:948.2px;top:612.59px;font-size:11px;line-height:11px;color:#111;letter-spacing:-0.2px;">FV-3/2023</div>
<div class="t" style="left:1042px;top:612.59px;font-size:11px;line-height:11px;color:#111;letter-spacing:-0.2px;">DPH výstup 21%</div>
<div class="t" style="left:457.8px;width:1000px;text-align:right;top:612.59px;font-size:11px;line-height:11px;color:#111;letter-spacing:-0.2px;">2 100,00 CZK</div>
<div class="t" style="left:547.7px;width:1000px;text-align:right;top:612.59px;font-size:11px;line-height:11px;color:#111;letter-spacing:-0.2px;">2 100,00 CZK</div>
<div class="t" style="left:1560px;top:612.59px;font-size:11px;line-height:11px;color:#111;letter-spacing:-0.2px;">311000</div>
<div class="t" style="left:1623.5px;top:612.59px;font-size:11px;line-height:11px;color:#111;letter-spacing:-0.2px;">000</div>
<div class="t" style="left:1664.6px;top:612.59px;font-size:11px;line-height:11px;color:#111;letter-spacing:-0.2px;">343210</div>
<div class="t" style="left:1728.5px;top:612.59px;font-size:11px;line-height:11px;color:#111;letter-spacing:-0.2px;">000</div>
<div style="position:absolute;left:880px;top:630.5px;width:868px;height:25.5px;background:#d8d3ec;"></div>
<div style="position:absolute;left:863px;top:630px;width:885px;height:1px;background:#c9c5dd;"></div>
<div style="position:absolute;left:885px;top:630px;width:54.5px;height:26px;overflow:hidden">
<div class="t" style="left:0.7px;top:8.59px;font-size:11px;line-height:11px;color:#111;letter-spacing:0.25px;">16.10.2023</div>
</div>
<div class="t" style="left:948.2px;top:638.59px;font-size:11px;line-height:11px;color:#111;letter-spacing:-0.2px;">FV-3/2023</div>
<div class="t" style="left:1042px;top:638.59px;font-size:11px;line-height:11px;color:#111;letter-spacing:-0.2px;">školení</div>
<div class="t" style="left:457.8px;width:1000px;text-align:right;top:638.59px;font-size:11px;line-height:11px;color:#111;letter-spacing:-0.2px;">10 000,00 CZK</div>
<div class="t" style="left:547.7px;width:1000px;text-align:right;top:638.59px;font-size:11px;line-height:11px;color:#111;letter-spacing:-0.2px;">10 000,00 CZK</div>
<div class="t" style="left:1560px;top:638.59px;font-size:11px;line-height:11px;color:#111;letter-spacing:-0.2px;">311000</div>
<div class="t" style="left:1623.5px;top:638.59px;font-size:11px;line-height:11px;color:#111;letter-spacing:-0.2px;">000</div>
<div class="t" style="left:1664.6px;top:638.59px;font-size:11px;line-height:11px;color:#111;letter-spacing:-0.2px;">6</div>
<div class="t" style="left:1728.5px;top:638.59px;font-size:11px;line-height:11px;color:#111;letter-spacing:-0.2px;">000</div>
<div style="position:absolute;left:863px;top:656px;width:885px;height:1px;background:#cccccc;"></div>
<div style="position:absolute;left:885px;top:656px;width:54.5px;height:26px;overflow:hidden">
<div class="t" style="left:0.7px;top:8.59px;font-size:11px;line-height:11px;color:#111;letter-spacing:0.25px;">16.10.2023</div>
</div>
<div class="t" style="left:948.2px;top:664.59px;font-size:11px;line-height:11px;color:#111;letter-spacing:-0.2px;">FP-1/2023</div>
<div class="t" style="left:1042px;top:664.59px;font-size:11px;line-height:11px;color:#111;letter-spacing:-0.2px;">DPH vstup 21%</div>
<div class="t" style="left:457.8px;width:1000px;text-align:right;top:664.59px;font-size:11px;line-height:11px;color:#111;letter-spacing:-0.2px;">2 100,00 CZK</div>
<div class="t" style="left:547.7px;width:1000px;text-align:right;top:664.59px;font-size:11px;line-height:11px;color:#111;letter-spacing:-0.2px;">2 100,00 CZK</div>
<div class="t" style="left:1560px;top:664.59px;font-size:11px;line-height:11px;color:#111;letter-spacing:-0.2px;">343210</div>
<div class="t" style="left:1623.5px;top:664.59px;font-size:11px;line-height:11px;color:#111;letter-spacing:-0.2px;">000</div>
<div class="t" style="left:1664.6px;top:664.59px;font-size:11px;line-height:11px;color:#111;letter-spacing:-0.2px;">321000</div>
<div class="t" style="left:1728.5px;top:664.59px;font-size:11px;line-height:11px;color:#111;letter-spacing:-0.2px;">000</div>
<div style="position:absolute;left:863px;top:682px;width:885px;height:1px;background:#cccccc;"></div>
<div style="position:absolute;left:885px;top:682px;width:54.5px;height:26px;overflow:hidden">
<div class="t" style="left:0.7px;top:8.59px;font-size:11px;line-height:11px;color:#111;letter-spacing:0.25px;">16.10.2023</div>
</div>
<div class="t" style="left:948.2px;top:690.59px;font-size:11px;line-height:11px;color:#111;letter-spacing:-0.2px;">FP-1/2023</div>
<div class="t" style="left:1042px;top:690.59px;font-size:11px;line-height:11px;color:#111;letter-spacing:-0.2px;">Skladová karta - HRMOD Hrnek modrý</div>
<div class="t" style="left:457.8px;width:1000px;text-align:right;top:690.59px;font-size:11px;line-height:11px;color:#111;letter-spacing:-0.2px;">5 000,00 CZK</div>
<div class="t" style="left:547.7px;width:1000px;text-align:right;top:690.59px;font-size:11px;line-height:11px;color:#111;letter-spacing:-0.2px;">5 000,00 CZK</div>
<div class="t" style="left:1623.5px;top:690.59px;font-size:11px;line-height:11px;color:#111;letter-spacing:-0.2px;">000</div>
<div class="t" style="left:1664.6px;top:690.59px;font-size:11px;line-height:11px;color:#111;letter-spacing:-0.2px;">321000</div>
<div class="t" style="left:1728.5px;top:690.59px;font-size:11px;line-height:11px;color:#111;letter-spacing:-0.2px;">000</div>
<div style="position:absolute;left:863px;top:708px;width:885px;height:1px;background:#cccccc;"></div>
<div style="position:absolute;left:885px;top:708px;width:54.5px;height:26px;overflow:hidden">
<div class="t" style="left:0.7px;top:8.59px;font-size:11px;line-height:11px;color:#111;letter-spacing:0.25px;">16.10.2023</div>
</div>
<div class="t" style="left:948.2px;top:716.59px;font-size:11px;line-height:11px;color:#111;letter-spacing:-0.2px;">FP-1/2023</div>
<div class="t" style="left:1042px;top:716.59px;font-size:11px;line-height:11px;color:#111;letter-spacing:-0.2px;">Skladová karta - HRZEL Hrnek zelený</div>
<div class="t" style="left:457.8px;width:1000px;text-align:right;top:716.59px;font-size:11px;line-height:11px;color:#111;letter-spacing:-0.2px;">5 000,00 CZK</div>
<div class="t" style="left:547.7px;width:1000px;text-align:right;top:716.59px;font-size:11px;line-height:11px;color:#111;letter-spacing:-0.2px;">5 000,00 CZK</div>
<div class="t" style="left:1623.5px;top:716.59px;font-size:11px;line-height:11px;color:#111;letter-spacing:-0.2px;">000</div>
<div class="t" style="left:1664.6px;top:716.59px;font-size:11px;line-height:11px;color:#111;letter-spacing:-0.2px;">321000</div>
<div class="t" style="left:1728.5px;top:716.59px;font-size:11px;line-height:11px;color:#111;letter-spacing:-0.2px;">000</div>
<div style="position:absolute;left:880px;top:734.5px;width:868px;height:25.5px;background:#d8d3ec;"></div>
<div style="position:absolute;left:863px;top:734px;width:885px;height:1px;background:#cccccc;"></div>
<div style="position:absolute;left:885px;top:734px;width:54.5px;height:26px;overflow:hidden">
<div class="t" style="left:0.7px;top:8.59px;font-size:11px;line-height:11px;color:#111;letter-spacing:0.25px;">16.10.2023</div>
</div>
<div class="t" style="left:948.2px;top:742.59px;font-size:11px;line-height:11px;color:#111;letter-spacing:-0.2px;">PP-1/2023</div>
<div class="t" style="left:1042px;top:742.59px;font-size:11px;line-height:11px;color:#111;letter-spacing:-0.2px;">Platba FV-2/2023</div>
<div class="t" style="left:457.8px;width:1000px;text-align:right;top:742.59px;font-size:11px;line-height:11px;color:#111;letter-spacing:-0.2px;">2 286,50 CZK</div>
<div class="t" style="left:547.7px;width:1000px;text-align:right;top:742.59px;font-size:11px;line-height:11px;color:#111;letter-spacing:-0.2px;">2 286,50 CZK</div>
<div class="t" style="left:1560px;top:742.59px;font-size:11px;line-height:11px;color:#111;letter-spacing:-0.2px;">211100</div>
<div class="t" style="left:1623.5px;top:742.59px;font-size:11px;line-height:11px;color:#111;letter-spacing:-0.2px;">000</div>
<div class="t" style="left:1664.6px;top:742.59px;font-size:11px;line-height:11px;color:#111;letter-spacing:-0.2px;">311000</div>
<div class="t" style="left:1728.5px;top:742.59px;font-size:11px;line-height:11px;color:#111;letter-spacing:-0.2px;">000</div>
<div style="position:absolute;left:863px;top:760px;width:885px;height:1px;background:#cccccc;"></div>
<div style="position:absolute;left:885px;top:760px;width:54.5px;height:26px;overflow:hidden">
<div class="t" style="left:0.7px;top:8.59px;font-size:11px;line-height:11px;color:#111;letter-spacing:0.25px;">16.10.2023</div>
</div>
<div class="t" style="left:948.2px;top:768.59px;font-size:11px;line-height:11px;color:#111;letter-spacing:-0.2px;">PP-2/2023</div>
<div class="t" style="left:1042px;top:768.59px;font-size:11px;line-height:11px;color:#111;letter-spacing:-0.2px;">Platba FV-3/2023</div>
<div class="t" style="left:457.8px;width:1000px;text-align:right;top:768.59px;font-size:11px;line-height:11px;color:#111;letter-spacing:-0.2px;">11 857,00 CZK</div>
<div class="t" style="left:547.7px;width:1000px;text-align:right;top:768.59px;font-size:11px;line-height:11px;color:#111;letter-spacing:-0.2px;">11 857,00 CZK</div>
<div class="t" style="left:1560px;top:768.59px;font-size:11px;line-height:11px;color:#111;letter-spacing:-0.2px;">211100</div>
<div class="t" style="left:1623.5px;top:768.59px;font-size:11px;line-height:11px;color:#111;letter-spacing:-0.2px;">000</div>
<div class="t" style="left:1664.6px;top:768.59px;font-size:11px;line-height:11px;color:#111;letter-spacing:-0.2px;">311000</div>
<div class="t" style="left:1728.5px;top:768.59px;font-size:11px;line-height:11px;color:#111;letter-spacing:-0.2px;">000</div>
<div style="position:absolute;left:880px;top:786.5px;width:868px;height:25.5px;background:#d8d3ec;"></div>
<div style="position:absolute;left:863px;top:786px;width:885px;height:1px;background:#cccccc;"></div>
<div style="position:absolute;left:885px;top:786px;width:54.5px;height:26px;overflow:hidden">
<div class="t" style="left:0.7px;top:8.59px;font-size:11px;line-height:11px;color:#111;letter-spacing:0.25px;">16.10.2023</div>
</div>
<div class="t" style="left:948.2px;top:794.59px;font-size:11px;line-height:11px;color:#111;letter-spacing:-0.2px;">PV-1/2023</div>
<div class="t" style="left:1042px;top:794.59px;font-size:11px;line-height:11px;color:#111;letter-spacing:-0.2px;">Platba FP-1/2023</div>
<div class="t" style="left:457.8px;width:1000px;text-align:right;top:794.59px;font-size:11px;line-height:11px;color:#111;letter-spacing:-0.2px;">12 100,00 CZK</div>
<div class="t" style="left:547.7px;width:1000px;text-align:right;top:794.59px;font-size:11px;line-height:11px;color:#111;letter-spacing:-0.2px;">12 100,00 CZK</div>
<div class="t" style="left:1560px;top:794.59px;font-size:11px;line-height:11px;color:#111;letter-spacing:-0.2px;">321000</div>
<div class="t" style="left:1623.5px;top:794.59px;font-size:11px;line-height:11px;color:#111;letter-spacing:-0.2px;">000</div>
<div class="t" style="left:1664.6px;top:794.59px;font-size:11px;line-height:11px;color:#111;letter-spacing:-0.2px;">211100</div>
<div class="t" style="left:1728.5px;top:794.59px;font-size:11px;line-height:11px;color:#111;letter-spacing:-0.2px;">000</div>
<div style="position:absolute;left:863px;top:812px;width:885px;height:1px;background:#cccccc;"></div>
<div style="position:absolute;left:885px;top:812px;width:54.5px;height:26px;overflow:hidden">
<div class="t" style="left:0.7px;top:8.59px;font-size:11px;line-height:11px;color:#111;letter-spacing:0.25px;">16.10.2023</div>
</div>
<div class="t" style="left:948.2px;top:820.59px;font-size:11px;line-height:11px;color:#111;letter-spacing:-0.2px;">DV-1/2023</div>
<div class="t" style="left:1042px;top:820.59px;font-size:11px;line-height:11px;color:#111;letter-spacing:-0.2px;">DPH výstup 21%</div>
<div class="t" style="left:457.8px;width:1000px;text-align:right;top:820.59px;font-size:11px;line-height:11px;color:#111;letter-spacing:-0.2px;">-42,17 CZK</div>
<div class="t" style="left:547.7px;width:1000px;text-align:right;top:820.59px;font-size:11px;line-height:11px;color:#111;letter-spacing:-0.2px;">-42,17 CZK</div>
<div class="t" style="left:1560px;top:820.59px;font-size:11px;line-height:11px;color:#111;letter-spacing:-0.2px;">311000</div>
<div class="t" style="left:1623.5px;top:820.59px;font-size:11px;line-height:11px;color:#111;letter-spacing:-0.2px;">000</div>
<div class="t" style="left:1664.6px;top:820.59px;font-size:11px;line-height:11px;color:#111;letter-spacing:-0.2px;">343210</div>
<div class="t" style="left:1728.5px;top:820.59px;font-size:11px;line-height:11px;color:#111;letter-spacing:-0.2px;">000</div>
<div style="position:absolute;left:863px;top:838px;width:885px;height:1px;background:#cccccc;"></div>
<div style="position:absolute;left:885px;top:838px;width:54.5px;height:26px;overflow:hidden">
<div class="t" style="left:0.7px;top:8.59px;font-size:11px;line-height:11px;color:#111;letter-spacing:0.25px;">16.10.2023</div>
</div>
<div class="t" style="left:948.2px;top:846.59px;font-size:11px;line-height:11px;color:#111;letter-spacing:-0.2px;">DV-1/2023</div>
<div class="t" style="left:1042px;top:846.59px;font-size:11px;line-height:11px;color:#111;letter-spacing:-0.2px;">školení</div>
<div class="t" style="left:457.8px;width:1000px;text-align:right;top:846.59px;font-size:11px;line-height:11px;color:#111;letter-spacing:-0.2px;">-200,83 CZK</div>
<div class="t" style="left:547.7px;width:1000px;text-align:right;top:846.59px;font-size:11px;line-height:11px;color:#111;letter-spacing:-0.2px;">-200,83 CZK</div>
<div class="t" style="left:1560px;top:846.59px;font-size:11px;line-height:11px;color:#111;letter-spacing:-0.2px;">311000</div>
<div class="t" style="left:1623.5px;top:846.59px;font-size:11px;line-height:11px;color:#111;letter-spacing:-0.2px;">000</div>
<div class="t" style="left:1664.6px;top:846.59px;font-size:11px;line-height:11px;color:#111;letter-spacing:-0.2px;">6</div>
<div class="t" style="left:1728.5px;top:846.59px;font-size:11px;line-height:11px;color:#111;letter-spacing:-0.2px;">000</div>
<div style="position:absolute;left:880px;top:864.5px;width:868px;height:25.5px;background:#d8d3ec;"></div>
<div style="position:absolute;left:863px;top:864px;width:885px;height:1px;background:#cccccc;"></div>
<div style="position:absolute;left:885px;top:864px;width:54.5px;height:26px;overflow:hidden">
<div class="t" style="left:0.7px;top:8.59px;font-size:11px;line-height:11px;color:#111;letter-spacing:0.25px;">16.10.2023</div>
</div>
<div class="t" style="left:948.2px;top:872.59px;font-size:11px;line-height:11px;color:#111;letter-spacing:-0.2px;">VZ-1/2023</div>
<div class="t" style="left:1042px;top:872.59px;font-size:11px;line-height:11px;color:#111;letter-spacing:-0.2px;">Platba DV-1/2023</div>
<div class="t" style="left:457.8px;width:1000px;text-align:right;top:872.59px;font-size:11px;line-height:11px;color:#111;letter-spacing:-0.2px;">243,00 CZK</div>
<div class="t" style="left:547.7px;width:1000px;text-align:right;top:872.59px;font-size:11px;line-height:11px;color:#111;letter-spacing:-0.2px;">243,00 CZK</div>
<div class="t" style="left:1560px;top:872.59px;font-size:11px;line-height:11px;color:#111;letter-spacing:-0.2px;">311000</div>
<div class="t" style="left:1623.5px;top:872.59px;font-size:11px;line-height:11px;color:#111;letter-spacing:-0.2px;">000</div>
<div class="t" style="left:1728.5px;top:872.59px;font-size:11px;line-height:11px;color:#111;letter-spacing:-0.2px;">000</div>
<div style="position:absolute;left:880px;top:890.5px;width:868px;height:25.5px;background:#d8d3ec;"></div>
<div style="position:absolute;left:863px;top:890px;width:885px;height:1px;background:#c9c5dd;"></div>
<div style="position:absolute;left:885px;top:890px;width:54.5px;height:26px;overflow:hidden">
<div class="t" style="left:0.7px;top:8.59px;font-size:11px;line-height:11px;color:#111;letter-spacing:0.25px;">16.10.2023</div>
</div>
<div class="t" style="left:948.2px;top:898.59px;font-size:11px;line-height:11px;color:#111;letter-spacing:-0.2px;">VZ-1/2023</div>
<div class="t" style="left:1042px;top:898.59px;font-size:11px;line-height:11px;color:#111;letter-spacing:-0.2px;">Platba FV-3/2023</div>
<div class="t" style="left:457.8px;width:1000px;text-align:right;top:898.59px;font-size:11px;line-height:11px;color:#111;letter-spacing:-0.2px;">243,00 CZK</div>
<div class="t" style="left:547.7px;width:1000px;text-align:right;top:898.59px;font-size:11px;line-height:11px;color:#111;letter-spacing:-0.2px;">243,00 CZK</div>
<div class="t" style="left:1623.5px;top:898.59px;font-size:11px;line-height:11px;color:#111;letter-spacing:-0.2px;">000</div>
<div class="t" style="left:1664.6px;top:898.59px;font-size:11px;line-height:11px;color:#111;letter-spacing:-0.2px;">311000</div>
<div class="t" style="left:1728.5px;top:898.59px;font-size:11px;line-height:11px;color:#111;letter-spacing:-0.2px;">000</div>
<div style="position:absolute;left:863px;top:916px;width:885px;height:1px;background:#cccccc;"></div>
<div style="position:absolute;left:885px;top:916px;width:54.5px;height:26px;overflow:hidden">
<div class="t" style="left:0.7px;top:8.59px;font-size:11px;line-height:11px;color:#111;letter-spacing:0.25px;">17.10.2023</div>
</div>
<div class="t" style="left:948.2px;top:924.59px;font-size:11px;line-height:11px;color:#111;letter-spacing:-0.2px;">FV-4/2023</div>
<div class="t" style="left:1042px;top:924.59px;font-size:11px;line-height:11px;color:#111;letter-spacing:-0.2px;">DPH výstup 21%</div>
<div class="t" style="left:457.8px;width:1000px;text-align:right;top:924.59px;font-size:11px;line-height:11px;color:#111;letter-spacing:-0.2px;">36 661,84 CZK</div>
<div class="t" style="left:547.7px;width:1000px;text-align:right;top:924.59px;font-size:11px;line-height:11px;color:#111;letter-spacing:-0.2px;">36 661,84 CZK</div>
<div class="t" style="left:1560px;top:924.59px;font-size:11px;line-height:11px;color:#111;letter-spacing:-0.2px;">311000</div>
<div class="t" style="left:1623.5px;top:924.59px;font-size:11px;line-height:11px;color:#111;letter-spacing:-0.2px;">000</div>
<div class="t" style="left:1664.6px;top:924.59px;font-size:11px;line-height:11px;color:#111;letter-spacing:-0.2px;">343210</div>
<div class="t" style="left:1728.5px;top:924.59px;font-size:11px;line-height:11px;color:#111;letter-spacing:-0.2px;">000</div>
<div style="position:absolute;left:863px;top:942px;width:885px;height:1px;background:#cccccc;"></div>
<div style="position:absolute;left:885px;top:942px;width:54.5px;height:26px;overflow:hidden">
<div class="t" style="left:0.7px;top:8.59px;font-size:11px;line-height:11px;color:#111;letter-spacing:0.25px;">17.10.2023</div>
</div>
<div class="t" style="left:948.2px;top:950.59px;font-size:11px;line-height:11px;color:#111;letter-spacing:-0.2px;">FV-4/2023</div>
<div class="t" style="left:1042px;top:950.59px;font-size:11px;line-height:11px;color:#111;letter-spacing:-0.2px;">Tržba za Zboží</div>
<div class="t" style="left:457.8px;width:1000px;text-align:right;top:950.59px;font-size:11px;line-height:11px;color:#111;letter-spacing:-0.2px;">174 580,20 CZK</div>
<div class="t" style="left:547.7px;width:1000px;text-align:right;top:950.59px;font-size:11px;line-height:11px;color:#111;letter-spacing:-0.2px;">174 580,20 CZK</div>
<div class="t" style="left:1560px;top:950.59px;font-size:11px;line-height:11px;color:#111;letter-spacing:-0.2px;">311000</div>
<div class="t" style="left:1623.5px;top:950.59px;font-size:11px;line-height:11px;color:#111;letter-spacing:-0.2px;">000</div>
<div class="t" style="left:1664.6px;top:950.59px;font-size:11px;line-height:11px;color:#111;letter-spacing:-0.2px;">604000</div>
<div class="t" style="left:1728.5px;top:950.59px;font-size:11px;line-height:11px;color:#111;letter-spacing:-0.2px;">000</div>
<div style="position:absolute;left:863px;top:968px;width:885px;height:1px;background:#cccccc;"></div>
<div style="position:absolute;left:1753px;top:232px;width:17px;height:754px;background:#f0f0f0;"></div>
<div style="position:absolute;left:1753px;top:233px;width:17px;height:16px;background:#e4e4e4;"></div>
<div style="position:absolute;left:1753px;top:969.5px;width:17px;height:16.5px;background:#e4e4e4;"></div>
<div style="position:absolute;left:1755.5px;top:404px;width:12px;height:221px;background:#cdcdcd;border-radius:2px;"></div>
<svg style="position:absolute;left:1753px;top:232px;" width="17" height="755" viewBox="1753 232 17 755"><path d="M1756.2 243.2L1761.3 237.8L1766.4 243.2Z M1756.2 975L1761.3 980.4L1766.4 975Z" fill="#676767"/></svg>
<div style="position:absolute;left:858px;top:986px;width:895px;height:17px;background:#f0f0f0;"></div>
<div style="position:absolute;left:858px;top:986px;width:16px;height:17px;background:#e4e4e4;"></div>
<div style="position:absolute;left:875px;top:988px;width:17px;height:13px;background:#cdcdcd;border-radius:2px;"></div>
<div style="position:absolute;left:1737px;top:986px;width:16px;height:17px;background:#e4e4e4;"></div>
<div style="position:absolute;left:1753px;top:986px;width:17px;height:17px;background:#e4e4e4;"></div>
<svg style="position:absolute;left:858px;top:986px;" width="895" height="17" viewBox="858 986 895 17"><path d="M869.8 989L864.5 994.3L869.8 999.6Z M1741 989L1746.3 994.3L1741 999.6Z" fill="#676767"/></svg>
<div style="position:absolute;left:1790px;top:100px;width:121px;height:22.5px;background:#cfe0f3;border-radius:3px;"></div>
<div class="t" style="left:1799.9px;top:107.49px;font-size:11px;line-height:11px;color:#111;letter-spacing:0.005px;">Tisk, export</div>
<svg style="position:absolute;left:1897px;top:107px;" width="12" height="8" viewBox="1897 107 12 8"><path d="M1899 109H1906L1902.5 113.2Z" fill="#111"/></svg>
<div style="position:absolute;left:1790px;top:133px;width:121px;height:22.5px;background:#cfe0f3;border-radius:3px;"></div>
<div class="t" style="left:1799.9px;top:140.49px;font-size:11px;line-height:11px;color:#111;letter-spacing:0.091px;">Opravit</div>
<svg style="position:absolute;left:1897px;top:140px;" width="12" height="8" viewBox="1897 140 12 8"><path d="M1899 142H1906L1902.5 146.2Z" fill="#111"/></svg>
<div style="position:absolute;left:1790px;top:176px;width:121px;height:22.5px;background:#cfe0f3;border-radius:3px;"></div>
<div class="t" style="left:1799.9px;top:183.49px;font-size:11px;line-height:11px;color:#111;letter-spacing:0.054px;">Občerstvit</div>
<div style="position:absolute;left:1790px;top:209px;width:121px;height:22.5px;background:#cfe0f3;border-radius:3px;"></div>
<div class="t" style="left:1799.9px;top:216.49px;font-size:11px;line-height:11px;color:#111;letter-spacing:-0.096px;">Zdr.doklad</div>
<svg style="position:absolute;left:1897px;top:216px;" width="12" height="8" viewBox="1897 216 12 8"><path d="M1899 218H1906L1902.5 222.2Z" fill="#111"/></svg>
<div style="position:absolute;left:1790px;top:242px;width:121px;height:22.5px;background:#cfe0f3;border-radius:3px;"></div>
<div class="t" style="left:1799.9px;top:249.49px;font-size:11px;line-height:11px;color:#111;letter-spacing:0.15px;">Zaúčtovat</div>
<div style="position:absolute;left:1790px;top:275px;width:121px;height:22.5px;background:#cfe0f3;border-radius:3px;"></div>
<div class="t" style="left:1799.9px;top:282.49px;font-size:11px;line-height:11px;color:#111;letter-spacing:0.075px;">Rozúčtovat</div>
<div style="position:absolute;left:1790px;top:318px;width:121px;height:22.5px;background:#cfe0f3;border-radius:3px;"></div>
<div class="t" style="left:1799.9px;top:325.49px;font-size:11px;line-height:11px;color:#111;letter-spacing:-0.029px;">Najít</div>
<div style="position:absolute;left:1789px;top:351px;width:122px;height:22.5px;background:#e6e6e6;border-radius:3px;"></div>
<div class="t" style="left:1799.9px;top:358.49px;font-size:11px;line-height:11px;color:#999;letter-spacing:-0.341px;">Najít další</div>
<div style="position:absolute;left:1790px;top:384px;width:121px;height:22.5px;background:#cfe0f3;border-radius:3px;"></div>
<div class="t" style="left:1799.9px;top:391.49px;font-size:11px;line-height:11px;color:#111;letter-spacing:-0.19px;">Najít doklad</div>
<div style="position:absolute;left:1790px;top:417px;width:121px;height:22.5px;background:#cfe0f3;border-radius:3px;"></div>
<div class="t" style="left:1799.9px;top:424.49px;font-size:11px;line-height:11px;color:#111;letter-spacing:-0.168px;">Skrýt náhled</div>
<svg style="position:absolute;left:1897px;top:424px;" width="12" height="8" viewBox="1897 424 12 8"><path d="M1899 426H1906L1902.5 430.2Z" fill="#111"/></svg>
<div class="t" style="left:4px;top:1017.69px;font-size:11px;line-height:11px;color:#222;letter-spacing:-0.287px;">Supervisor</div>
<div class="t" style="left:253.5px;top:1017.69px;font-size:11px;line-height:11px;color:#222;letter-spacing:-0.23px;">Spojení: Demodata</div>
<div class="t" style="left:503.5px;top:1017.69px;font-size:11px;line-height:11px;color:#222;letter-spacing:0.043px;">Verze: 25.0.20</div>
<div class="t" style="left:654px;top:1017.69px;font-size:11px;line-height:11px;color:#222;letter-spacing:-0.062px;">10.12.2024 (Julie)</div>
<div class="t" style="left:803px;top:1017.69px;font-size:11px;line-height:11px;color:#222;letter-spacing:-0.015px;">Hotline: +420 296 397 330</div>
<div style="position:absolute;left:0;top:1032px;width:1920px;height:8px;background:linear-gradient(90deg,#1c2029 0%,#1c2130 17%,#121c52 25%,#0f1b5a 45%,#121d55 53%,#171d40 57%,#121d55 62%,#13205a 68%,#1b1f2a 73%,#1c1f27 100%)"></div>
<div style="position:absolute;left:966px;top:1038.5px;width:7px;height:6px;border-radius:50%;background:#c8333a"></div>
<div style="position:absolute;left:1205px;top:1036px;width:40px;height:6px;border-radius:3px;background:#28305e"></div>
</body></html>
